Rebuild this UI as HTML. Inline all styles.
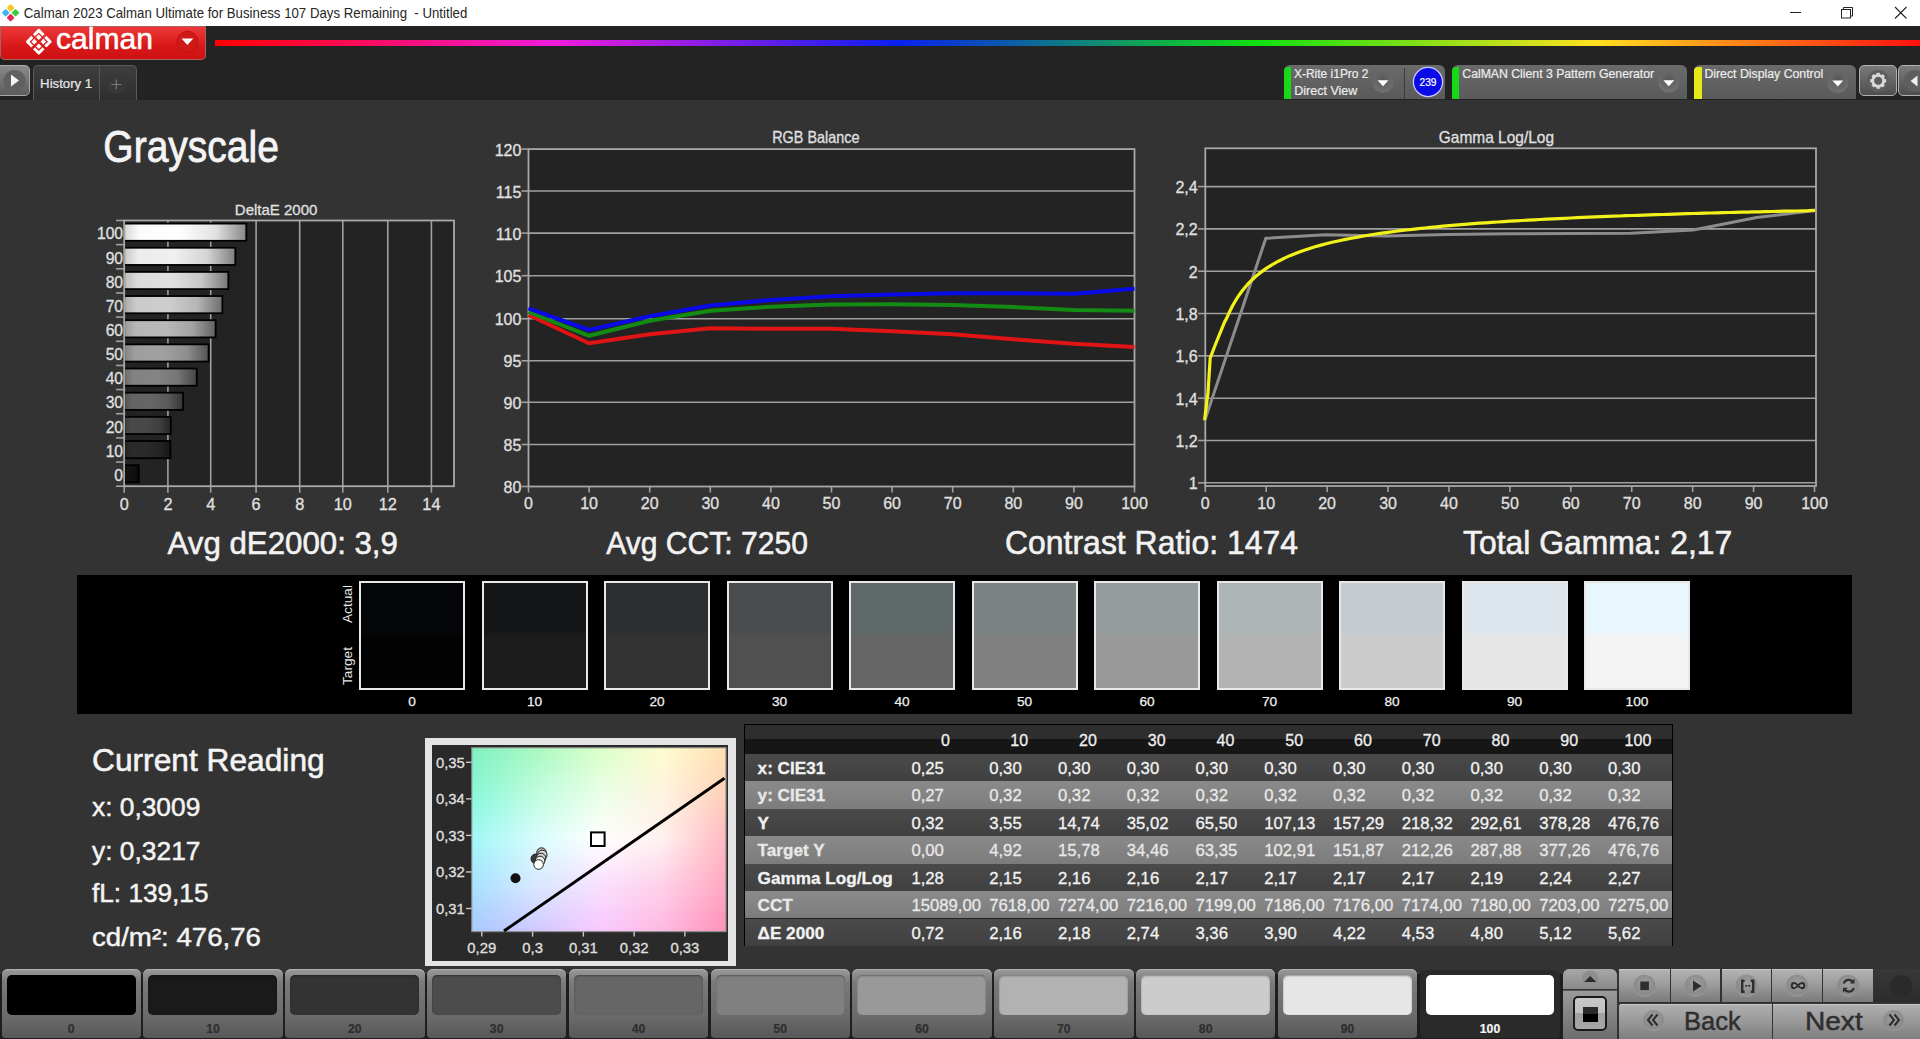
<!DOCTYPE html>
<html><head><meta charset="utf-8"><title>Calman</title>
<style>
html,body{margin:0;padding:0;width:1920px;height:1039px;overflow:hidden;background:#333;}
body{position:relative;font-family:"Liberation Sans", sans-serif;}
body>div{position:absolute;}
body>div>div{position:absolute;}
svg.ov{position:absolute;left:0;top:0;}
svg.ov text{font-family:"Liberation Sans", sans-serif;}
</style></head><body>
<div style="left:0px;top:0px;width:1920px;height:1039px;background:#333333"></div><div style="left:0px;top:0px;width:1920px;height:26px;background:#ffffff"></div><div style="left:0px;top:26px;width:1920px;height:74px;background:#232323"></div><div style="left:0px;top:26px;width:206px;height:33.5px;background:linear-gradient(#ee3a3a,#d81818 60%,#cc1010);border-radius:0 0 5px 5px;box-shadow:0 0 0 1px #a86060 inset"></div><div style="left:214.5px;top:39.5px;width:1705.5px;height:6px;background:linear-gradient(90deg,#ff0000 0%,#f01cdc 20%,#0a20f0 40%,#10e010 61%,#ffe020 81%,#ff1010 100%)"></div><div style="left:-4px;top:65.3px;width:34.4px;height:31px;background:linear-gradient(#8a8a8a,#5c5c5c);border:1px solid #a8a8a8;border-radius:5px;box-sizing:border-box"></div><div style="left:33.2px;top:65.3px;width:103.7px;height:34.7px;background:linear-gradient(#3e3e3e,#2e2e2e);border:1px solid #5a5a5a;border-bottom:none;border-radius:5px 5px 0 0;box-sizing:border-box"></div><div style="left:98.6px;top:66px;width:1.2px;height:34px;background:#555"></div><div style="left:1283.8px;top:65.3px;width:161.20000000000005px;height:33.3px;background:linear-gradient(#6a6a6a,#5a5a5a);border-radius:6px 6px 0 0"></div><div style="left:1283.8px;top:66.5px;width:7.5px;height:32.1px;background:#18d818;border-radius:4px 0 0 0"></div><div style="left:1404.2px;top:68px;width:1.3px;height:30.6px;background:#3a3a3a"></div><div style="left:1451.9px;top:65.3px;width:235.19999999999982px;height:33.3px;background:linear-gradient(#6a6a6a,#5a5a5a);border-radius:6px 6px 0 0"></div><div style="left:1451.9px;top:66.5px;width:7.5px;height:32.1px;background:#18d818;border-radius:4px 0 0 0"></div><div style="left:1694px;top:65.3px;width:162px;height:33.3px;background:linear-gradient(#6a6a6a,#5a5a5a);border-radius:6px 6px 0 0"></div><div style="left:1694px;top:66.5px;width:7.5px;height:32.1px;background:#e8e818;border-radius:4px 0 0 0"></div><div style="left:1859.4px;top:65.3px;width:37.5px;height:31.2px;background:linear-gradient(#7a7a7a,#4e4e4e);border:1px solid #b0b0b0;border-radius:5px;box-sizing:border-box"></div><div style="left:1898px;top:65.3px;width:30px;height:31.2px;background:linear-gradient(#7a7a7a,#4e4e4e);border:1px solid #b0b0b0;border-radius:5px;box-sizing:border-box"></div><div style="left:124.2px;top:220.5px;width:329.8px;height:265.7px;background:#232323"></div><div style="left:528.5px;top:148.5px;width:606.0px;height:338.5px;background:#232323"></div><div style="left:1205.3px;top:148.3px;width:610.7px;height:337.7px;background:#232323"></div><div style="left:77px;top:575.3px;width:1774.6px;height:138.5px;background:#000"></div><div style="left:359.0px;top:581px;width:106px;height:109px;background:linear-gradient(#050608 0%,#050608 45%,#020202 53%,#020202 100%);border:2px solid #e8e8e8;box-sizing:border-box"></div><div style="left:481.5px;top:581px;width:106px;height:109px;background:linear-gradient(#151618 0%,#151618 45%,#1c1c1c 53%,#1c1c1c 100%);border:2px solid #e8e8e8;box-sizing:border-box"></div><div style="left:604.0px;top:581px;width:106px;height:109px;background:linear-gradient(#2c2f30 0%,#2c2f30 45%,#333333 53%,#333333 100%);border:2px solid #e8e8e8;box-sizing:border-box"></div><div style="left:726.5px;top:581px;width:106px;height:109px;background:linear-gradient(#4a4d50 0%,#4a4d50 45%,#505050 53%,#505050 100%);border:2px solid #e8e8e8;box-sizing:border-box"></div><div style="left:849.0px;top:581px;width:106px;height:109px;background:linear-gradient(#5f6868 0%,#5f6868 45%,#666666 53%,#666666 100%);border:2px solid #e8e8e8;box-sizing:border-box"></div><div style="left:971.5px;top:581px;width:106px;height:109px;background:linear-gradient(#7a8283 0%,#7a8283 45%,#808080 53%,#808080 100%);border:2px solid #e8e8e8;box-sizing:border-box"></div><div style="left:1094.0px;top:581px;width:106px;height:109px;background:linear-gradient(#949c9e 0%,#949c9e 45%,#999999 53%,#999999 100%);border:2px solid #e8e8e8;box-sizing:border-box"></div><div style="left:1216.5px;top:581px;width:106px;height:109px;background:linear-gradient(#adb5b7 0%,#adb5b7 45%,#b3b3b3 53%,#b3b3b3 100%);border:2px solid #e8e8e8;box-sizing:border-box"></div><div style="left:1339.0px;top:581px;width:106px;height:109px;background:linear-gradient(#c4ccd1 0%,#c4ccd1 45%,#cccccc 53%,#cccccc 100%);border:2px solid #e8e8e8;box-sizing:border-box"></div><div style="left:1461.5px;top:581px;width:106px;height:109px;background:linear-gradient(#dce6ec 0%,#dce6ec 45%,#e6e6e6 53%,#e6e6e6 100%);border:2px solid #e8e8e8;box-sizing:border-box"></div><div style="left:1584.0px;top:581px;width:106px;height:109px;background:linear-gradient(#e8f6fd 0%,#e8f6fd 45%,#f4f4f4 53%,#f4f4f4 100%);border:2px solid #e8e8e8;box-sizing:border-box"></div><div style="left:424.7px;top:737.8px;width:311.3px;height:228px;background:#e4e4e4"></div><div style="left:431.8px;top:744.6px;width:296.7px;height:216.4px;background:#2a2a2a"></div><div style="left:471.7px;top:747.7px;width:254.3px;height:183.89999999999998px;overflow:hidden"><div style="left:0;top:0.00px;width:100%;height:4.60px;background:linear-gradient(90deg,#7ff0c1 0.0%,#94f4c1 12.5%,#a9f8c1 25.0%,#c1fcc5 37.5%,#d9ffc9 50.0%,#ecfdcd 62.5%,#fffcd1 75.0%,#ffedc1 87.5%,#ffdfb0 100.0%)"></div><div style="left:0;top:4.00px;width:100%;height:4.60px;background:linear-gradient(90deg,#80f1c3 0.0%,#96f5c4 12.5%,#abf9c4 25.0%,#c3fcc8 37.5%,#daffcc 50.0%,#edfdcf 62.5%,#fffbd2 75.0%,#ffecc2 87.5%,#ffdeb1 100.0%)"></div><div style="left:0;top:8.00px;width:100%;height:4.60px;background:linear-gradient(90deg,#81f2c5 0.0%,#97f5c6 12.5%,#adf9c7 25.0%,#c5fccb 37.5%,#dcffcf 50.0%,#edfdd1 62.5%,#fffad3 75.0%,#ffebc3 87.5%,#ffddb2 100.0%)"></div><div style="left:0;top:11.99px;width:100%;height:4.60px;background:linear-gradient(90deg,#82f2c7 0.0%,#99f6c9 12.5%,#aff9ca 25.0%,#c6fcce 37.5%,#ddffd2 50.0%,#eefcd3 62.5%,#fffad5 75.0%,#ffeac4 87.5%,#ffdbb2 100.0%)"></div><div style="left:0;top:15.99px;width:100%;height:4.60px;background:linear-gradient(90deg,#83f3c9 0.0%,#9af6cb 12.5%,#b1facd 25.0%,#c8fcd1 37.5%,#dfffd5 50.0%,#effcd5 62.5%,#fff9d6 75.0%,#ffe9c5 87.5%,#ffdab3 100.0%)"></div><div style="left:0;top:19.99px;width:100%;height:4.60px;background:linear-gradient(90deg,#83f4cb 0.0%,#9bf7cd 12.5%,#b3facf 25.0%,#cafcd3 37.5%,#e1ffd7 50.0%,#f0fcd7 62.5%,#fff8d8 75.0%,#ffe8c6 87.5%,#ffd8b4 100.0%)"></div><div style="left:0;top:23.99px;width:100%;height:4.60px;background:linear-gradient(90deg,#84f5ce 0.0%,#9df7d0 12.5%,#b6fad2 25.0%,#ccfdd6 37.5%,#e2ffda 50.0%,#f1fbda 62.5%,#fff7d9 75.0%,#ffe7c7 87.5%,#ffd7b5 100.0%)"></div><div style="left:0;top:27.98px;width:100%;height:4.60px;background:linear-gradient(90deg,#85f5d0 0.0%,#9ef8d2 12.5%,#b8fbd5 25.0%,#cefdd9 37.5%,#e4ffdd 50.0%,#f1fbdc 62.5%,#fff7da 75.0%,#ffe6c8 87.5%,#ffd6b5 100.0%)"></div><div style="left:0;top:31.98px;width:100%;height:4.60px;background:linear-gradient(90deg,#86f6d2 0.0%,#a0f8d5 12.5%,#bafbd8 25.0%,#d0fddc 37.5%,#e5ffe0 50.0%,#f2fbde 62.5%,#fff6dc 75.0%,#ffe5c9 87.5%,#ffd4b6 100.0%)"></div><div style="left:0;top:35.98px;width:100%;height:4.60px;background:linear-gradient(90deg,#86f7d4 0.0%,#a1f9d7 12.5%,#bcfbda 25.0%,#d1fdde 37.5%,#e7ffe2 50.0%,#f3fae0 62.5%,#fff5dd 75.0%,#ffe4ca 87.5%,#ffd3b7 100.0%)"></div><div style="left:0;top:39.98px;width:100%;height:4.60px;background:linear-gradient(90deg,#87f7d6 0.0%,#a3f9da 12.5%,#befcdd 25.0%,#d3fde1 37.5%,#e8ffe5 50.0%,#f4fae2 62.5%,#fff5df 75.0%,#ffe3cb 87.5%,#ffd1b7 100.0%)"></div><div style="left:0;top:43.98px;width:100%;height:4.60px;background:linear-gradient(90deg,#88f8d8 0.0%,#a4fadc 12.5%,#c0fce0 25.0%,#d5fee4 37.5%,#eaffe8 50.0%,#f4fae4 62.5%,#fff4e0 75.0%,#ffe2cc 87.5%,#ffd0b8 100.0%)"></div><div style="left:0;top:47.97px;width:100%;height:4.60px;background:linear-gradient(90deg,#8af8db 0.0%,#a6fadf 12.5%,#c2fce2 25.0%,#d7fee6 37.5%,#ecffea 50.0%,#f5f9e6 62.5%,#fff4e1 75.0%,#ffe1cd 87.5%,#ffceb9 100.0%)"></div><div style="left:0;top:51.97px;width:100%;height:4.60px;background:linear-gradient(90deg,#8cf8de 0.0%,#a8fae1 12.5%,#c4fce5 25.0%,#d9fee8 37.5%,#eeffec 50.0%,#f6f9e7 62.5%,#fff3e3 75.0%,#ffe0ce 87.5%,#ffccb9 100.0%)"></div><div style="left:0;top:55.97px;width:100%;height:4.60px;background:linear-gradient(90deg,#8ef8e0 0.0%,#aafae4 12.5%,#c6fce7 25.0%,#dbfeeb 37.5%,#efffee 50.0%,#f7f9e9 62.5%,#fff3e4 75.0%,#ffdecf 87.5%,#ffcaba 100.0%)"></div><div style="left:0;top:59.97px;width:100%;height:4.60px;background:linear-gradient(90deg,#90f8e3 0.0%,#acfae6 12.5%,#c8fcea 25.0%,#ddfeed 37.5%,#f1fff0 50.0%,#f8f9eb 62.5%,#fff3e6 75.0%,#ffddd0 87.5%,#ffc8bb 100.0%)"></div><div style="left:0;top:63.97px;width:100%;height:4.60px;background:linear-gradient(90deg,#92f8e6 0.0%,#aefae9 12.5%,#cafcec 25.0%,#dffeef 37.5%,#f3fff2 50.0%,#f9f9ec 62.5%,#fff2e7 75.0%,#ffdcd1 87.5%,#ffc6bb 100.0%)"></div><div style="left:0;top:67.96px;width:100%;height:4.60px;background:linear-gradient(90deg,#95f8e9 0.0%,#b1faec 12.5%,#cdfcef 25.0%,#e1fef1 37.5%,#f5fff4 50.0%,#faf8ee 62.5%,#fff2e8 75.0%,#ffdbd2 87.5%,#ffc3bc 100.0%)"></div><div style="left:0;top:71.96px;width:100%;height:4.60px;background:linear-gradient(90deg,#97f8eb 0.0%,#b3faee 12.5%,#cffcf1 25.0%,#e3fef4 37.5%,#f7fff6 50.0%,#fbf8f0 62.5%,#fff2ea 75.0%,#ffd9d3 87.5%,#ffc1bd 100.0%)"></div><div style="left:0;top:75.96px;width:100%;height:4.60px;background:linear-gradient(90deg,#99f8ee 0.0%,#b5faf1 12.5%,#d1fcf3 25.0%,#e5fef6 37.5%,#f9fff8 50.0%,#fcf8f2 62.5%,#fff1eb 75.0%,#ffd8d4 87.5%,#ffbfbe 100.0%)"></div><div style="left:0;top:79.96px;width:100%;height:4.60px;background:linear-gradient(90deg,#9bf8f1 0.0%,#b7faf3 12.5%,#d3fcf6 25.0%,#e7fef8 37.5%,#fafffa 50.0%,#fdf8f3 62.5%,#fff1ed 75.0%,#ffd7d5 87.5%,#ffbdbe 100.0%)"></div><div style="left:0;top:83.95px;width:100%;height:4.60px;background:linear-gradient(90deg,#9df8f4 0.0%,#b9faf6 12.5%,#d5fcf8 25.0%,#e9fefa 37.5%,#fcfffc 50.0%,#fef8f5 62.5%,#fff1ee 75.0%,#ffd6d6 87.5%,#ffbbbf 100.0%)"></div><div style="left:0;top:87.95px;width:100%;height:4.60px;background:linear-gradient(90deg,#9ff8f7 0.0%,#bbfaf9 12.5%,#d7fcfb 25.0%,#ebfefc 37.5%,#fefffe 50.0%,#fff8f7 62.5%,#fff0ef 75.0%,#ffd5d7 87.5%,#ffb9c0 100.0%)"></div><div style="left:0;top:91.95px;width:100%;height:4.60px;background:linear-gradient(90deg,#a0f7f8 0.0%,#bcf9fa 12.5%,#d8fbfc 25.0%,#ebfcfe 37.5%,#fffeff 50.0%,#fff6f7 62.5%,#ffeff0 75.0%,#ffd3d8 87.5%,#ffb7c0 100.0%)"></div><div style="left:0;top:95.95px;width:100%;height:4.60px;background:linear-gradient(90deg,#a1f5f9 0.0%,#bdf7fb 12.5%,#d8f9fc 25.0%,#ebfafe 37.5%,#fefbff 50.0%,#fff3f7 62.5%,#ffecef 75.0%,#ffd1d7 87.5%,#ffb6c0 100.0%)"></div><div style="left:0;top:99.95px;width:100%;height:4.60px;background:linear-gradient(90deg,#a2f3fa 0.0%,#bdf5fb 12.5%,#d8f8fd 25.0%,#ebf8fe 37.5%,#fdf8ff 50.0%,#fef1f7 62.5%,#ffe9ee 75.0%,#ffcfd7 87.5%,#ffb5c0 100.0%)"></div><div style="left:0;top:103.94px;width:100%;height:4.60px;background:linear-gradient(90deg,#a2f1fa 0.0%,#bdf3fc 12.5%,#d8f6fd 25.0%,#eaf6fe 37.5%,#fdf6ff 50.0%,#feeef6 62.5%,#ffe6ee 75.0%,#ffcdd7 87.5%,#ffb3c0 100.0%)"></div><div style="left:0;top:107.94px;width:100%;height:4.60px;background:linear-gradient(90deg,#a3effb 0.0%,#bef1fc 12.5%,#d8f4fd 25.0%,#eaf4fe 37.5%,#fcf3ff 50.0%,#feebf6 62.5%,#ffe3ed 75.0%,#ffcbd6 87.5%,#ffb2c0 100.0%)"></div><div style="left:0;top:111.94px;width:100%;height:4.60px;background:linear-gradient(90deg,#a4edfb 0.0%,#beeffc 12.5%,#d8f2fd 25.0%,#eaf1fe 37.5%,#fcf0ff 50.0%,#fde8f6 62.5%,#ffe1ec 75.0%,#ffc9d6 87.5%,#ffb0c0 100.0%)"></div><div style="left:0;top:115.94px;width:100%;height:4.60px;background:linear-gradient(90deg,#a5eafc 0.0%,#beeefd 12.5%,#d8f1fe 25.0%,#eaeffe 37.5%,#fbedff 50.0%,#fde6f5 62.5%,#ffdeeb 75.0%,#ffc6d6 87.5%,#ffafc0 100.0%)"></div><div style="left:0;top:119.93px;width:100%;height:4.60px;background:linear-gradient(90deg,#a5e8fd 0.0%,#bfecfd 12.5%,#d8effe 25.0%,#e9edfe 37.5%,#faebff 50.0%,#fde3f5 62.5%,#ffdbeb 75.0%,#ffc4d5 87.5%,#ffaec0 100.0%)"></div><div style="left:0;top:123.93px;width:100%;height:4.60px;background:linear-gradient(90deg,#a6e6fd 0.0%,#bfeafe 12.5%,#d8edfe 25.0%,#e9ebff 37.5%,#fae8ff 50.0%,#fce0f5 62.5%,#ffd8ea 75.0%,#ffc2d5 87.5%,#ffacc0 100.0%)"></div><div style="left:0;top:127.93px;width:100%;height:4.60px;background:linear-gradient(90deg,#a7e4fe 0.0%,#bfe8fe 12.5%,#d8ebfe 25.0%,#e9e8ff 37.5%,#f9e5ff 50.0%,#fcddf4 62.5%,#ffd6e9 75.0%,#ffc0d5 87.5%,#ffabc0 100.0%)"></div><div style="left:0;top:131.93px;width:100%;height:4.60px;background:linear-gradient(90deg,#a7e2fe 0.0%,#c0e6ff 12.5%,#d8eaff 25.0%,#e8e6ff 37.5%,#f9e3ff 50.0%,#fcdbf4 62.5%,#ffd3e9 75.0%,#ffbed4 87.5%,#ffa9c0 100.0%)"></div><div style="left:0;top:135.93px;width:100%;height:4.60px;background:linear-gradient(90deg,#a8e0ff 0.0%,#c0e4ff 12.5%,#d8e8ff 25.0%,#e8e4ff 37.5%,#f8e0ff 50.0%,#fcd8f4 62.5%,#ffd0e8 75.0%,#ffbcd4 87.5%,#ffa8c0 100.0%)"></div><div style="left:0;top:139.92px;width:100%;height:4.60px;background:linear-gradient(90deg,#a8deff 0.0%,#c0e2ff 12.5%,#d7e5ff 25.0%,#e8e2ff 37.5%,#f8deff 50.0%,#fcd6f3 62.5%,#ffcee7 75.0%,#ffbad3 87.5%,#ffa6bf 100.0%)"></div><div style="left:0;top:143.92px;width:100%;height:4.60px;background:linear-gradient(90deg,#a8dcff 0.0%,#bfdfff 12.5%,#d7e2ff 25.0%,#e7dfff 37.5%,#f8dcff 50.0%,#fcd4f3 62.5%,#ffcce7 75.0%,#ffb8d3 87.5%,#ffa4bf 100.0%)"></div><div style="left:0;top:147.92px;width:100%;height:4.60px;background:linear-gradient(90deg,#a8daff 0.0%,#bfddff 12.5%,#d6e0ff 25.0%,#e7ddff 37.5%,#f8daff 50.0%,#fcd2f2 62.5%,#ffcae6 75.0%,#ffb6d2 87.5%,#ffa2be 100.0%)"></div><div style="left:0;top:151.92px;width:100%;height:4.60px;background:linear-gradient(90deg,#a8d8ff 0.0%,#bfdaff 12.5%,#d5ddff 25.0%,#e7daff 37.5%,#f8d8ff 50.0%,#fcd0f2 62.5%,#ffc8e5 75.0%,#ffb4d1 87.5%,#ffa0bd 100.0%)"></div><div style="left:0;top:155.92px;width:100%;height:4.60px;background:linear-gradient(90deg,#a8d6ff 0.0%,#bed8ff 12.5%,#d5daff 25.0%,#e6d8ff 37.5%,#f8d6ff 50.0%,#fccef2 62.5%,#ffc6e5 75.0%,#ffb2d1 87.5%,#ff9ebd 100.0%)"></div><div style="left:0;top:159.91px;width:100%;height:4.60px;background:linear-gradient(90deg,#a8d3ff 0.0%,#bed5ff 12.5%,#d4d7ff 25.0%,#e6d5ff 37.5%,#f8d3ff 50.0%,#fccbf1 62.5%,#ffc3e4 75.0%,#ffafd0 87.5%,#ff9bbc 100.0%)"></div><div style="left:0;top:163.91px;width:100%;height:4.60px;background:linear-gradient(90deg,#a8d1ff 0.0%,#bed3ff 12.5%,#d3d5ff 25.0%,#e6d3ff 37.5%,#f8d1ff 50.0%,#fcc9f1 62.5%,#ffc1e3 75.0%,#ffadcf 87.5%,#ff99bb 100.0%)"></div><div style="left:0;top:167.91px;width:100%;height:4.60px;background:linear-gradient(90deg,#a8cfff 0.0%,#bdd1ff 12.5%,#d2d2ff 25.0%,#e5d1ff 37.5%,#f8cfff 50.0%,#fcc7f1 62.5%,#ffbfe2 75.0%,#ffabce 87.5%,#ff97ba 100.0%)"></div><div style="left:0;top:171.91px;width:100%;height:4.60px;background:linear-gradient(90deg,#a8cdff 0.0%,#bdceff 12.5%,#d2cfff 25.0%,#e5ceff 37.5%,#f8cdff 50.0%,#fcc5f0 62.5%,#ffbde2 75.0%,#ffa9ce 87.5%,#ff95ba 100.0%)"></div><div style="left:0;top:175.90px;width:100%;height:4.60px;background:linear-gradient(90deg,#a8cbff 0.0%,#bdccff 12.5%,#d1ccff 25.0%,#e5ccff 37.5%,#f8cbff 50.0%,#fcc3f0 62.5%,#ffbbe1 75.0%,#ffa7cd 87.5%,#ff93b9 100.0%)"></div><div style="left:0;top:179.90px;width:100%;height:4.60px;background:linear-gradient(90deg,#a8c9ff 0.0%,#bcc9ff 12.5%,#d0c9ff 25.0%,#e4c9ff 37.5%,#f8c9ff 50.0%,#fcc1f0 62.5%,#ffb9e0 75.0%,#ffa5cc 87.5%,#ff91b8 100.0%)"></div></div><div style="left:743.5px;top:723.5px;width:929.0px;height:222.1px;background:#202020;border:1px solid #000;border-bottom:none;box-sizing:border-box"></div><div style="left:744.5px;top:724.5px;width:927.0px;height:14.6px;background:#2e2e2e"></div><div style="left:744.5px;top:739.1px;width:927.0px;height:14.9px;background:#161616"></div><div style="left:744.5px;top:754.3px;width:927.0px;height:26.6px;background:linear-gradient(#4a4a4a,#404040)"></div><div style="left:744.5px;top:781.1999999999999px;width:927.0px;height:27.5px;background:linear-gradient(#8a8a8a,#7c7c7c)"></div><div style="left:744.5px;top:809.0px;width:927.0px;height:26.8px;background:linear-gradient(#4a4a4a,#404040)"></div><div style="left:744.5px;top:836.0999999999999px;width:927.0px;height:27.5px;background:linear-gradient(#8a8a8a,#7c7c7c)"></div><div style="left:744.5px;top:863.9px;width:927.0px;height:26.9px;background:linear-gradient(#4a4a4a,#404040)"></div><div style="left:744.5px;top:891.0999999999999px;width:927.0px;height:27.3px;background:linear-gradient(#8a8a8a,#7c7c7c)"></div><div style="left:744.5px;top:918.6999999999999px;width:927.0px;height:26.9px;background:linear-gradient(#4a4a4a,#404040)"></div><div style="left:0px;top:974px;width:1563px;height:65px;background:#1e1e1e"></div><div style="left:1.5px;top:968.8px;width:139.6px;height:68.8px;background:linear-gradient(#9a9a9a 0%,#7a7a7a 20%,#6a6a6a 70%,#585858 100%);border-radius:6px 6px 4px 4px;box-shadow:inset 0 1px 0 #b0b0b0"></div><div style="left:6.5px;top:974.6px;width:129px;height:40.8px;background:rgb(0,0,0);border-radius:5px;box-shadow:inset 0 1px 2px rgba(0,0,0,.35)"></div><div style="left:143.3px;top:968.8px;width:139.6px;height:68.8px;background:linear-gradient(#9a9a9a 0%,#7a7a7a 20%,#6a6a6a 70%,#585858 100%);border-radius:6px 6px 4px 4px;box-shadow:inset 0 1px 0 #b0b0b0"></div><div style="left:148.3px;top:974.6px;width:129px;height:40.8px;background:rgb(26,26,26);border-radius:5px;box-shadow:inset 0 1px 2px rgba(0,0,0,.35)"></div><div style="left:285.1px;top:968.8px;width:139.6px;height:68.8px;background:linear-gradient(#9a9a9a 0%,#7a7a7a 20%,#6a6a6a 70%,#585858 100%);border-radius:6px 6px 4px 4px;box-shadow:inset 0 1px 0 #b0b0b0"></div><div style="left:290.1px;top:974.6px;width:129px;height:40.8px;background:rgb(51,51,51);border-radius:5px;box-shadow:inset 0 1px 2px rgba(0,0,0,.35)"></div><div style="left:426.9px;top:968.8px;width:139.6px;height:68.8px;background:linear-gradient(#9a9a9a 0%,#7a7a7a 20%,#6a6a6a 70%,#585858 100%);border-radius:6px 6px 4px 4px;box-shadow:inset 0 1px 0 #b0b0b0"></div><div style="left:431.9px;top:974.6px;width:129px;height:40.8px;background:rgb(76,76,76);border-radius:5px;box-shadow:inset 0 1px 2px rgba(0,0,0,.35)"></div><div style="left:568.7px;top:968.8px;width:139.6px;height:68.8px;background:linear-gradient(#9a9a9a 0%,#7a7a7a 20%,#6a6a6a 70%,#585858 100%);border-radius:6px 6px 4px 4px;box-shadow:inset 0 1px 0 #b0b0b0"></div><div style="left:573.7px;top:974.6px;width:129px;height:40.8px;background:rgb(102,102,102);border-radius:5px;box-shadow:inset 0 1px 2px rgba(0,0,0,.35)"></div><div style="left:710.5px;top:968.8px;width:139.6px;height:68.8px;background:linear-gradient(#9a9a9a 0%,#7a7a7a 20%,#6a6a6a 70%,#585858 100%);border-radius:6px 6px 4px 4px;box-shadow:inset 0 1px 0 #b0b0b0"></div><div style="left:715.5px;top:974.6px;width:129px;height:40.8px;background:rgb(128,128,128);border-radius:5px;box-shadow:inset 0 1px 2px rgba(0,0,0,.35)"></div><div style="left:852.3px;top:968.8px;width:139.6px;height:68.8px;background:linear-gradient(#9a9a9a 0%,#7a7a7a 20%,#6a6a6a 70%,#585858 100%);border-radius:6px 6px 4px 4px;box-shadow:inset 0 1px 0 #b0b0b0"></div><div style="left:857.3px;top:974.6px;width:129px;height:40.8px;background:rgb(153,153,153);border-radius:5px;box-shadow:inset 0 1px 2px rgba(0,0,0,.35)"></div><div style="left:994.1px;top:968.8px;width:139.6px;height:68.8px;background:linear-gradient(#9a9a9a 0%,#7a7a7a 20%,#6a6a6a 70%,#585858 100%);border-radius:6px 6px 4px 4px;box-shadow:inset 0 1px 0 #b0b0b0"></div><div style="left:999.1px;top:974.6px;width:129px;height:40.8px;background:rgb(178,178,178);border-radius:5px;box-shadow:inset 0 1px 2px rgba(0,0,0,.35)"></div><div style="left:1135.9px;top:968.8px;width:139.6px;height:68.8px;background:linear-gradient(#9a9a9a 0%,#7a7a7a 20%,#6a6a6a 70%,#585858 100%);border-radius:6px 6px 4px 4px;box-shadow:inset 0 1px 0 #b0b0b0"></div><div style="left:1140.9px;top:974.6px;width:129px;height:40.8px;background:rgb(204,204,204);border-radius:5px;box-shadow:inset 0 1px 2px rgba(0,0,0,.35)"></div><div style="left:1277.7px;top:968.8px;width:139.6px;height:68.8px;background:linear-gradient(#9a9a9a 0%,#7a7a7a 20%,#6a6a6a 70%,#585858 100%);border-radius:6px 6px 4px 4px;box-shadow:inset 0 1px 0 #b0b0b0"></div><div style="left:1282.7px;top:974.6px;width:129px;height:40.8px;background:rgb(230,230,230);border-radius:5px;box-shadow:inset 0 1px 2px rgba(0,0,0,.35)"></div><div style="left:1420.3px;top:969.5px;width:139.5px;height:68.1px;background:#2a2a2a;border-radius:6px 6px 4px 4px"></div><div style="left:1426.3px;top:974.9px;width:128.1px;height:40.6px;background:#ffffff;border-radius:5px"></div><div style="left:1563.1px;top:969.2px;width:54.2px;height:20px;background:linear-gradient(#a8a8a8,#8a8a8a);border-radius:6px 6px 0 0"></div><div style="left:1563.1px;top:989.6px;width:54.2px;height:50px;background:linear-gradient(#9a9a9a,#6c6c6c);border-top:1px solid #5a5a5a;box-sizing:border-box"></div><div style="left:1573px;top:996.3px;width:34.4px;height:34.8px;background:linear-gradient(#c8c8c8 0%,#c0c0c0 50%,#a0a0a0 50%,#a8a8a8 100%);border:2.6px solid #1a1a1a;border-radius:5px;box-sizing:border-box"></div><div style="left:1583px;top:1007px;width:15px;height:14.8px;background:linear-gradient(#2a2a2a 0%,#2a2a2a 45%,#000 45%)"></div><div style="left:1618.9px;top:969px;width:50.9px;height:33.2px;background:linear-gradient(#b4b4b4,#a0a0a0 40%,#7a7a7a);box-shadow:inset 0 1px 0 #c8c8c8"></div><div style="left:1671px;top:969px;width:49.3px;height:33.2px;background:linear-gradient(#b4b4b4,#a0a0a0 40%,#7a7a7a);box-shadow:inset 0 1px 0 #c8c8c8"></div><div style="left:1721.5px;top:969px;width:49.6px;height:33.2px;background:linear-gradient(#b4b4b4,#a0a0a0 40%,#7a7a7a);box-shadow:inset 0 1px 0 #c8c8c8"></div><div style="left:1772.3px;top:969px;width:49.5px;height:33.2px;background:linear-gradient(#b4b4b4,#a0a0a0 40%,#7a7a7a);box-shadow:inset 0 1px 0 #c8c8c8"></div><div style="left:1823px;top:969px;width:50.0px;height:33.2px;background:linear-gradient(#b4b4b4,#a0a0a0 40%,#7a7a7a);box-shadow:inset 0 1px 0 #c8c8c8"></div><div style="left:1874.2px;top:969px;width:45.8px;height:33.2px;background:linear-gradient(#383838,#2c2c2c)"></div><div style="left:1618.9px;top:1003.8px;width:153px;height:36px;background:linear-gradient(#b0b0b0,#989898 50%,#7c7c7c);border-radius:3px 0 0 0;box-shadow:inset 0 1px 0 #c8c8c8"></div><div style="left:1773.0px;top:1003.8px;width:147px;height:36px;background:linear-gradient(#b0b0b0,#989898 50%,#7c7c7c);box-shadow:inset 0 1px 0 #c8c8c8"></div>
<svg class="ov" width="1920" height="1039" viewBox="0 0 1920 1039">
<defs><linearGradient id="bar0" x1="0" y1="0" x2="1" y2="0"><stop offset="0" stop-color="rgb(216,216,216)"/><stop offset="0.12" stop-color="rgb(252,252,252)"/><stop offset="0.45" stop-color="rgb(255,255,255)"/><stop offset="0.75" stop-color="rgb(226,226,226)"/><stop offset="1" stop-color="rgb(138,138,138)"/></linearGradient><linearGradient id="bar1" x1="0" y1="0" x2="1" y2="0"><stop offset="0" stop-color="rgb(202,202,202)"/><stop offset="0.12" stop-color="rgb(236,236,236)"/><stop offset="0.45" stop-color="rgb(240,240,240)"/><stop offset="0.75" stop-color="rgb(212,212,212)"/><stop offset="1" stop-color="rgb(129,129,129)"/></linearGradient><linearGradient id="bar2" x1="0" y1="0" x2="1" y2="0"><stop offset="0" stop-color="rgb(189,189,189)"/><stop offset="0.12" stop-color="rgb(220,220,220)"/><stop offset="0.45" stop-color="rgb(224,224,224)"/><stop offset="0.75" stop-color="rgb(198,198,198)"/><stop offset="1" stop-color="rgb(121,121,121)"/></linearGradient><linearGradient id="bar3" x1="0" y1="0" x2="1" y2="0"><stop offset="0" stop-color="rgb(173,173,173)"/><stop offset="0.12" stop-color="rgb(202,202,202)"/><stop offset="0.45" stop-color="rgb(206,206,206)"/><stop offset="0.75" stop-color="rgb(181,181,181)"/><stop offset="1" stop-color="rgb(111,111,111)"/></linearGradient><linearGradient id="bar4" x1="0" y1="0" x2="1" y2="0"><stop offset="0" stop-color="rgb(156,156,156)"/><stop offset="0.12" stop-color="rgb(182,182,182)"/><stop offset="0.45" stop-color="rgb(185,185,185)"/><stop offset="0.75" stop-color="rgb(163,163,163)"/><stop offset="1" stop-color="rgb(100,100,100)"/></linearGradient><linearGradient id="bar5" x1="0" y1="0" x2="1" y2="0"><stop offset="0" stop-color="rgb(135,135,135)"/><stop offset="0.12" stop-color="rgb(158,158,158)"/><stop offset="0.45" stop-color="rgb(161,161,161)"/><stop offset="0.75" stop-color="rgb(142,142,142)"/><stop offset="1" stop-color="rgb(86,86,86)"/></linearGradient><linearGradient id="bar6" x1="0" y1="0" x2="1" y2="0"><stop offset="0" stop-color="rgb(111,111,111)"/><stop offset="0.12" stop-color="rgb(130,130,130)"/><stop offset="0.45" stop-color="rgb(132,132,132)"/><stop offset="0.75" stop-color="rgb(117,117,117)"/><stop offset="1" stop-color="rgb(71,71,71)"/></linearGradient><linearGradient id="bar7" x1="0" y1="0" x2="1" y2="0"><stop offset="0" stop-color="rgb(86,86,86)"/><stop offset="0.12" stop-color="rgb(100,100,100)"/><stop offset="0.45" stop-color="rgb(102,102,102)"/><stop offset="0.75" stop-color="rgb(90,90,90)"/><stop offset="1" stop-color="rgb(55,55,55)"/></linearGradient><linearGradient id="bar8" x1="0" y1="0" x2="1" y2="0"><stop offset="0" stop-color="rgb(61,61,61)"/><stop offset="0.12" stop-color="rgb(72,72,72)"/><stop offset="0.45" stop-color="rgb(73,73,73)"/><stop offset="0.75" stop-color="rgb(64,64,64)"/><stop offset="1" stop-color="rgb(39,39,39)"/></linearGradient><linearGradient id="bar9" x1="0" y1="0" x2="1" y2="0"><stop offset="0" stop-color="rgb(36,36,36)"/><stop offset="0.12" stop-color="rgb(42,42,42)"/><stop offset="0.45" stop-color="rgb(42,42,42)"/><stop offset="0.75" stop-color="rgb(37,37,37)"/><stop offset="1" stop-color="rgb(23,23,23)"/></linearGradient><linearGradient id="bar10" x1="0" y1="0" x2="1" y2="0"><stop offset="0" stop-color="rgb(15,15,15)"/><stop offset="0.12" stop-color="rgb(18,18,18)"/><stop offset="0.45" stop-color="rgb(18,18,18)"/><stop offset="0.75" stop-color="rgb(16,16,16)"/><stop offset="1" stop-color="rgb(9,9,9)"/></linearGradient><radialGradient id="ddg" cx="0.5" cy="0.35" r="0.6"><stop offset="0" stop-color="#585858"/><stop offset="1" stop-color="#707070"/></radialGradient><radialGradient id="tbg" cx="0.5" cy="0.4" r="0.6"><stop offset="0" stop-color="#a0a0a0"/><stop offset="0.8" stop-color="#8a8a8a"/><stop offset="1" stop-color="#9a9a9a"/></radialGradient></defs>
<g transform="translate(10.6,12.8) rotate(45)"><rect x="-6.3" y="-6.3" width="5.7" height="5.7" rx="1" fill="#f6c72a"/><rect x="0.6" y="-6.3" width="5.7" height="5.7" rx="1" fill="#34cf3c"/><rect x="0.6" y="0.6" width="5.7" height="5.7" rx="1" fill="#e62a58"/><rect x="-6.3" y="0.6" width="5.7" height="5.7" rx="1" fill="#3cb6ec"/></g><text x="23.80" y="17.80" font-size="14.10" fill="#262626" textLength="443.50" lengthAdjust="spacingAndGlyphs" >Calman 2023 Calman Ultimate for Business 107 Days Remaining  - Untitled</text><line x1="1790" y1="12.5" x2="1801" y2="12.5" stroke="#222" stroke-width="1"/><rect x="1841.5" y="9.5" width="9" height="8.5" fill="none" stroke="#222" stroke-width="1"/><path d="M1843.5 9.5 V7.5 H1852.5 V16 H1850.5" fill="none" stroke="#222" stroke-width="1"/><path d="M1895 7 L1906.5 18.5 M1906.5 7 L1895 18.5" stroke="#222" stroke-width="1.1"/><g transform="translate(38.8,41.7) rotate(45)" fill="none" stroke="#fff" stroke-width="3" stroke-linejoin="round"><path d="M-8 -1.2 V-8 H-1.2 M1.2 -8 H8 V-1.2 M8 1.2 V8 H1.2 M-1.2 8 H-8 V1.2"/><g fill="#fff" stroke="none"><rect x="-5.2" y="-5.2" width="4" height="4"/><rect x="1.2" y="-5.2" width="4" height="4"/><rect x="-5.2" y="1.2" width="4" height="4"/><rect x="1.2" y="1.2" width="4" height="4"/></g></g><text x="56.00" y="49.20" font-size="29.50" fill="#ffffff" textLength="97.00" lengthAdjust="spacingAndGlyphs" stroke="#ffffff" stroke-width="0.53" >calman</text><circle cx="187.4" cy="41.8" r="10.5" fill="#d01a1a" stroke="#c01010" stroke-width="1"/><path d="M181.5 38.5 L193.3 38.5 L187.4 45 Z" fill="#fff"/><circle cx="14.5" cy="81" r="11" fill="#606060"/><path d="M11 74.5 L19 80.5 L11 86.5 Z" fill="#f5f5f5"/><text x="40.10" y="87.60" font-size="13.52" fill="#e6e6e6" textLength="52.10" lengthAdjust="spacingAndGlyphs" stroke="#e6e6e6" stroke-width="0.24" >History 1</text><circle cx="116.3" cy="84.5" r="9.5" fill="#383838"/><path d="M116.3 79.5 V89.5 M111.3 84.5 H121.3" stroke="#777" stroke-width="1.2"/><text x="1294.00" y="78.30" font-size="12.50" fill="#ececec" textLength="74.50" lengthAdjust="spacingAndGlyphs" stroke="#ececec" stroke-width="0.22" >X-Rite i1Pro 2</text><text x="1294.30" y="94.70" font-size="12.50" fill="#ececec" textLength="63.00" lengthAdjust="spacingAndGlyphs" stroke="#ececec" stroke-width="0.22" >Direct View</text><circle cx="1383" cy="82.3" r="10.5" fill="url(#ddg)"/><path d="M1377.5 80.3 L1388.5 80.3 L1383 86.3 Z" fill="#fff"/><circle cx="1428" cy="82" r="14.6" fill="#0a0ae8" stroke="#c8c8ff" stroke-width="1.3"/><text x="1428.00" y="86.20" font-size="11.63" fill="#ffffff" text-anchor="middle" textLength="17.00" lengthAdjust="spacingAndGlyphs" stroke="#ffffff" stroke-width="0.21" >239</text><text x="1462.30" y="78.30" font-size="12.50" fill="#ececec" textLength="191.80" lengthAdjust="spacingAndGlyphs" stroke="#ececec" stroke-width="0.22" >CalMAN Client 3 Pattern Generator</text><circle cx="1668.8" cy="82.3" r="10.5" fill="url(#ddg)"/><path d="M1663.3 80.3 L1674.3 80.3 L1668.8 86.3 Z" fill="#fff"/><text x="1704.40" y="78.30" font-size="12.50" fill="#ececec" textLength="118.90" lengthAdjust="spacingAndGlyphs" stroke="#ececec" stroke-width="0.22" >Direct Display Control</text><circle cx="1837.8" cy="82.5" r="10.5" fill="url(#ddg)"/><path d="M1832.3 80.5 L1843.3 80.5 L1837.8 86.5 Z" fill="#fff"/><circle cx="1878.2" cy="81" r="11" fill="#5e5e5e"/><g transform="translate(1878.2,80.8)" fill="#d8d8d8"><rect x="-1.6" y="-8" width="3.2" height="4" transform="rotate(0)"/><rect x="-1.6" y="-8" width="3.2" height="4" transform="rotate(45)"/><rect x="-1.6" y="-8" width="3.2" height="4" transform="rotate(90)"/><rect x="-1.6" y="-8" width="3.2" height="4" transform="rotate(135)"/><rect x="-1.6" y="-8" width="3.2" height="4" transform="rotate(180)"/><rect x="-1.6" y="-8" width="3.2" height="4" transform="rotate(225)"/><rect x="-1.6" y="-8" width="3.2" height="4" transform="rotate(270)"/><rect x="-1.6" y="-8" width="3.2" height="4" transform="rotate(315)"/><circle r="5.6" fill="none" stroke="#d8d8d8" stroke-width="2.6"/></g><circle cx="1915" cy="81" r="11" fill="#5e5e5e"/><path d="M1917.5 75.5 L1910.5 81 L1917.5 86.5 Z" fill="#f0f0f0"/><text x="103.30" y="162.20" font-size="43.46" fill="#f4f4f4" textLength="175.60" lengthAdjust="spacingAndGlyphs" stroke="#f4f4f4" stroke-width="0.78" >Grayscale</text><text x="234.80" y="215.40" font-size="15.55" fill="#e0e0e0" textLength="82.60" lengthAdjust="spacingAndGlyphs" stroke="#e0e0e0" stroke-width="0.28" >DeltaE 2000</text><text x="124.20" y="509.50" font-size="16.28" fill="#e0e0e0" text-anchor="middle" stroke="#e0e0e0" stroke-width="0.29" >0</text><text x="167.90" y="509.50" font-size="16.28" fill="#e0e0e0" text-anchor="middle" stroke="#e0e0e0" stroke-width="0.29" >2</text><text x="210.70" y="509.50" font-size="16.28" fill="#e0e0e0" text-anchor="middle" stroke="#e0e0e0" stroke-width="0.29" >4</text><text x="256.10" y="509.50" font-size="16.28" fill="#e0e0e0" text-anchor="middle" stroke="#e0e0e0" stroke-width="0.29" >6</text><text x="299.70" y="509.50" font-size="16.28" fill="#e0e0e0" text-anchor="middle" stroke="#e0e0e0" stroke-width="0.29" >8</text><text x="342.80" y="509.50" font-size="16.28" fill="#e0e0e0" text-anchor="middle" stroke="#e0e0e0" stroke-width="0.29" >10</text><text x="387.80" y="509.50" font-size="16.28" fill="#e0e0e0" text-anchor="middle" stroke="#e0e0e0" stroke-width="0.29" >12</text><text x="431.40" y="509.50" font-size="16.28" fill="#e0e0e0" text-anchor="middle" stroke="#e0e0e0" stroke-width="0.29" >14</text><line x1="124.2" y1="486.2" x2="124.2" y2="492.7" stroke="#a0a0a0" stroke-width="1.6"/><line x1="167.9" y1="220.5" x2="167.9" y2="486.2" stroke="#a0a0a0" stroke-width="1.6"/><line x1="167.9" y1="486.2" x2="167.9" y2="492.7" stroke="#a0a0a0" stroke-width="1.6"/><line x1="210.7" y1="220.5" x2="210.7" y2="486.2" stroke="#a0a0a0" stroke-width="1.6"/><line x1="210.7" y1="486.2" x2="210.7" y2="492.7" stroke="#a0a0a0" stroke-width="1.6"/><line x1="256.1" y1="220.5" x2="256.1" y2="486.2" stroke="#a0a0a0" stroke-width="1.6"/><line x1="256.1" y1="486.2" x2="256.1" y2="492.7" stroke="#a0a0a0" stroke-width="1.6"/><line x1="299.7" y1="220.5" x2="299.7" y2="486.2" stroke="#a0a0a0" stroke-width="1.6"/><line x1="299.7" y1="486.2" x2="299.7" y2="492.7" stroke="#a0a0a0" stroke-width="1.6"/><line x1="342.8" y1="220.5" x2="342.8" y2="486.2" stroke="#a0a0a0" stroke-width="1.6"/><line x1="342.8" y1="486.2" x2="342.8" y2="492.7" stroke="#a0a0a0" stroke-width="1.6"/><line x1="387.8" y1="220.5" x2="387.8" y2="486.2" stroke="#a0a0a0" stroke-width="1.6"/><line x1="387.8" y1="486.2" x2="387.8" y2="492.7" stroke="#a0a0a0" stroke-width="1.6"/><line x1="431.4" y1="220.5" x2="431.4" y2="486.2" stroke="#a0a0a0" stroke-width="1.6"/><line x1="431.4" y1="486.2" x2="431.4" y2="492.7" stroke="#a0a0a0" stroke-width="1.6"/><line x1="116" y1="220.50" x2="124.2" y2="220.50" stroke="#a0a0a0" stroke-width="1.6"/><line x1="116" y1="244.65" x2="124.2" y2="244.65" stroke="#a0a0a0" stroke-width="1.6"/><line x1="116" y1="268.81" x2="124.2" y2="268.81" stroke="#a0a0a0" stroke-width="1.6"/><line x1="116" y1="292.96" x2="124.2" y2="292.96" stroke="#a0a0a0" stroke-width="1.6"/><line x1="116" y1="317.12" x2="124.2" y2="317.12" stroke="#a0a0a0" stroke-width="1.6"/><line x1="116" y1="341.27" x2="124.2" y2="341.27" stroke="#a0a0a0" stroke-width="1.6"/><line x1="116" y1="365.43" x2="124.2" y2="365.43" stroke="#a0a0a0" stroke-width="1.6"/><line x1="116" y1="389.58" x2="124.2" y2="389.58" stroke="#a0a0a0" stroke-width="1.6"/><line x1="116" y1="413.74" x2="124.2" y2="413.74" stroke="#a0a0a0" stroke-width="1.6"/><line x1="116" y1="437.89" x2="124.2" y2="437.89" stroke="#a0a0a0" stroke-width="1.6"/><line x1="116" y1="462.05" x2="124.2" y2="462.05" stroke="#a0a0a0" stroke-width="1.6"/><line x1="116" y1="486.20" x2="124.2" y2="486.20" stroke="#a0a0a0" stroke-width="1.6"/><rect x="124.2" y="220.5" width="329.8" height="265.7" fill="none" stroke="#a8a8a8" stroke-width="1.8"/><text x="123.10" y="239.40" font-size="15.70" fill="#e0e0e0" text-anchor="end" stroke="#e0e0e0" stroke-width="0.28" >100</text><rect x="125.10000000000001" y="222.70" width="122.10" height="19" fill="#000"/><rect x="125.10000000000001" y="224.50" width="120.30" height="15.4" fill="url(#bar0)"/><text x="123.10" y="263.55" font-size="15.70" fill="#e0e0e0" text-anchor="end" stroke="#e0e0e0" stroke-width="0.28" >90</text><rect x="125.10000000000001" y="246.85" width="111.13" height="19" fill="#000"/><rect x="125.10000000000001" y="248.65" width="109.33" height="15.4" fill="url(#bar1)"/><text x="123.10" y="287.71" font-size="15.70" fill="#e0e0e0" text-anchor="end" stroke="#e0e0e0" stroke-width="0.28" >80</text><rect x="125.10000000000001" y="271.01" width="104.11" height="19" fill="#000"/><rect x="125.10000000000001" y="272.81" width="102.31" height="15.4" fill="url(#bar2)"/><text x="123.10" y="311.86" font-size="15.70" fill="#e0e0e0" text-anchor="end" stroke="#e0e0e0" stroke-width="0.28" >70</text><rect x="125.10000000000001" y="295.16" width="98.19" height="19" fill="#000"/><rect x="125.10000000000001" y="296.96" width="96.39" height="15.4" fill="url(#bar3)"/><text x="123.10" y="336.02" font-size="15.70" fill="#e0e0e0" text-anchor="end" stroke="#e0e0e0" stroke-width="0.28" >60</text><rect x="125.10000000000001" y="319.32" width="91.39" height="19" fill="#000"/><rect x="125.10000000000001" y="321.12" width="89.59" height="15.4" fill="url(#bar4)"/><text x="123.10" y="360.17" font-size="15.70" fill="#e0e0e0" text-anchor="end" stroke="#e0e0e0" stroke-width="0.28" >50</text><rect x="125.10000000000001" y="343.47" width="84.37" height="19" fill="#000"/><rect x="125.10000000000001" y="345.27" width="82.57" height="15.4" fill="url(#bar5)"/><text x="123.10" y="384.33" font-size="15.70" fill="#e0e0e0" text-anchor="end" stroke="#e0e0e0" stroke-width="0.28" >40</text><rect x="125.10000000000001" y="367.63" width="72.52" height="19" fill="#000"/><rect x="125.10000000000001" y="369.43" width="70.72" height="15.4" fill="url(#bar6)"/><text x="123.10" y="408.48" font-size="15.70" fill="#e0e0e0" text-anchor="end" stroke="#e0e0e0" stroke-width="0.28" >30</text><rect x="125.10000000000001" y="391.78" width="58.92" height="19" fill="#000"/><rect x="125.10000000000001" y="393.58" width="57.12" height="15.4" fill="url(#bar7)"/><text x="123.10" y="432.64" font-size="15.70" fill="#e0e0e0" text-anchor="end" stroke="#e0e0e0" stroke-width="0.28" >20</text><rect x="125.10000000000001" y="415.94" width="46.63" height="19" fill="#000"/><rect x="125.10000000000001" y="417.74" width="44.83" height="15.4" fill="url(#bar8)"/><text x="123.10" y="456.79" font-size="15.70" fill="#e0e0e0" text-anchor="end" stroke="#e0e0e0" stroke-width="0.28" >10</text><rect x="125.10000000000001" y="440.09" width="46.19" height="19" fill="#000"/><rect x="125.10000000000001" y="441.89" width="44.39" height="15.4" fill="url(#bar9)"/><text x="123.10" y="480.95" font-size="15.70" fill="#e0e0e0" text-anchor="end" stroke="#e0e0e0" stroke-width="0.28" >0</text><rect x="125.10000000000001" y="464.25" width="14.60" height="19" fill="#000"/><rect x="125.10000000000001" y="466.05" width="12.80" height="15.4" fill="url(#bar10)"/><text x="772.20" y="142.80" font-size="16.28" fill="#e0e0e0" textLength="87.20" lengthAdjust="spacingAndGlyphs" stroke="#e0e0e0" stroke-width="0.29" >RGB Balance</text><line x1="521.5" y1="149.10" x2="528.5" y2="149.10" stroke="#a0a0a0" stroke-width="1.6"/><text x="521.30" y="155.60" font-size="15.99" fill="#e0e0e0" text-anchor="end" stroke="#e0e0e0" stroke-width="0.29" >120</text><line x1="528.5" y1="191.00" x2="1134.5" y2="191.00" stroke="#a0a0a0" stroke-width="1.6"/><line x1="521.5" y1="191.00" x2="528.5" y2="191.00" stroke="#a0a0a0" stroke-width="1.6"/><text x="521.30" y="197.50" font-size="15.99" fill="#e0e0e0" text-anchor="end" stroke="#e0e0e0" stroke-width="0.29" >115</text><line x1="528.5" y1="233.10" x2="1134.5" y2="233.10" stroke="#a0a0a0" stroke-width="1.6"/><line x1="521.5" y1="233.10" x2="528.5" y2="233.10" stroke="#a0a0a0" stroke-width="1.6"/><text x="521.30" y="239.60" font-size="15.99" fill="#e0e0e0" text-anchor="end" stroke="#e0e0e0" stroke-width="0.29" >110</text><line x1="528.5" y1="275.70" x2="1134.5" y2="275.70" stroke="#a0a0a0" stroke-width="1.6"/><line x1="521.5" y1="275.70" x2="528.5" y2="275.70" stroke="#a0a0a0" stroke-width="1.6"/><text x="521.30" y="282.20" font-size="15.99" fill="#e0e0e0" text-anchor="end" stroke="#e0e0e0" stroke-width="0.29" >105</text><line x1="528.5" y1="318.80" x2="1134.5" y2="318.80" stroke="#a0a0a0" stroke-width="1.6"/><line x1="521.5" y1="318.80" x2="528.5" y2="318.80" stroke="#a0a0a0" stroke-width="1.6"/><text x="521.30" y="325.30" font-size="15.99" fill="#e0e0e0" text-anchor="end" stroke="#e0e0e0" stroke-width="0.29" >100</text><line x1="528.5" y1="360.80" x2="1134.5" y2="360.80" stroke="#a0a0a0" stroke-width="1.6"/><line x1="521.5" y1="360.80" x2="528.5" y2="360.80" stroke="#a0a0a0" stroke-width="1.6"/><text x="521.30" y="367.30" font-size="15.99" fill="#e0e0e0" text-anchor="end" stroke="#e0e0e0" stroke-width="0.29" >95</text><line x1="528.5" y1="402.30" x2="1134.5" y2="402.30" stroke="#a0a0a0" stroke-width="1.6"/><line x1="521.5" y1="402.30" x2="528.5" y2="402.30" stroke="#a0a0a0" stroke-width="1.6"/><text x="521.30" y="408.80" font-size="15.99" fill="#e0e0e0" text-anchor="end" stroke="#e0e0e0" stroke-width="0.29" >90</text><line x1="528.5" y1="444.50" x2="1134.5" y2="444.50" stroke="#a0a0a0" stroke-width="1.6"/><line x1="521.5" y1="444.50" x2="528.5" y2="444.50" stroke="#a0a0a0" stroke-width="1.6"/><text x="521.30" y="451.00" font-size="15.99" fill="#e0e0e0" text-anchor="end" stroke="#e0e0e0" stroke-width="0.29" >85</text><line x1="521.5" y1="486.50" x2="528.5" y2="486.50" stroke="#a0a0a0" stroke-width="1.6"/><text x="521.30" y="493.00" font-size="15.99" fill="#e0e0e0" text-anchor="end" stroke="#e0e0e0" stroke-width="0.29" >80</text><line x1="528.50" y1="486.5" x2="528.50" y2="492.5" stroke="#a0a0a0" stroke-width="1.6"/><text x="528.50" y="509.40" font-size="15.99" fill="#e0e0e0" text-anchor="middle" stroke="#e0e0e0" stroke-width="0.29" >0</text><line x1="589.10" y1="486.5" x2="589.10" y2="492.5" stroke="#a0a0a0" stroke-width="1.6"/><text x="589.10" y="509.40" font-size="15.99" fill="#e0e0e0" text-anchor="middle" stroke="#e0e0e0" stroke-width="0.29" >10</text><line x1="649.70" y1="486.5" x2="649.70" y2="492.5" stroke="#a0a0a0" stroke-width="1.6"/><text x="649.70" y="509.40" font-size="15.99" fill="#e0e0e0" text-anchor="middle" stroke="#e0e0e0" stroke-width="0.29" >20</text><line x1="710.30" y1="486.5" x2="710.30" y2="492.5" stroke="#a0a0a0" stroke-width="1.6"/><text x="710.30" y="509.40" font-size="15.99" fill="#e0e0e0" text-anchor="middle" stroke="#e0e0e0" stroke-width="0.29" >30</text><line x1="770.90" y1="486.5" x2="770.90" y2="492.5" stroke="#a0a0a0" stroke-width="1.6"/><text x="770.90" y="509.40" font-size="15.99" fill="#e0e0e0" text-anchor="middle" stroke="#e0e0e0" stroke-width="0.29" >40</text><line x1="831.50" y1="486.5" x2="831.50" y2="492.5" stroke="#a0a0a0" stroke-width="1.6"/><text x="831.50" y="509.40" font-size="15.99" fill="#e0e0e0" text-anchor="middle" stroke="#e0e0e0" stroke-width="0.29" >50</text><line x1="892.10" y1="486.5" x2="892.10" y2="492.5" stroke="#a0a0a0" stroke-width="1.6"/><text x="892.10" y="509.40" font-size="15.99" fill="#e0e0e0" text-anchor="middle" stroke="#e0e0e0" stroke-width="0.29" >60</text><line x1="952.70" y1="486.5" x2="952.70" y2="492.5" stroke="#a0a0a0" stroke-width="1.6"/><text x="952.70" y="509.40" font-size="15.99" fill="#e0e0e0" text-anchor="middle" stroke="#e0e0e0" stroke-width="0.29" >70</text><line x1="1013.30" y1="486.5" x2="1013.30" y2="492.5" stroke="#a0a0a0" stroke-width="1.6"/><text x="1013.30" y="509.40" font-size="15.99" fill="#e0e0e0" text-anchor="middle" stroke="#e0e0e0" stroke-width="0.29" >80</text><line x1="1073.90" y1="486.5" x2="1073.90" y2="492.5" stroke="#a0a0a0" stroke-width="1.6"/><text x="1073.90" y="509.40" font-size="15.99" fill="#e0e0e0" text-anchor="middle" stroke="#e0e0e0" stroke-width="0.29" >90</text><line x1="1134.50" y1="486.5" x2="1134.50" y2="492.5" stroke="#a0a0a0" stroke-width="1.6"/><text x="1134.50" y="509.40" font-size="15.99" fill="#e0e0e0" text-anchor="middle" stroke="#e0e0e0" stroke-width="0.29" >100</text><rect x="528.5" y="149.1" width="606.0" height="337.4" fill="none" stroke="#a8a8a8" stroke-width="1.8"/><polyline points="528.50,315.00 589.10,343.30 649.70,334.20 710.30,328.30 770.90,328.70 831.50,328.70 892.10,331.30 952.70,334.20 1013.30,339.20 1073.90,343.70 1134.50,347.00" fill="none" stroke="#e01414" stroke-width="4" stroke-linejoin="round"/><polyline points="528.50,312.00 589.10,335.80 649.70,320.80 710.30,310.80 770.90,306.70 831.50,304.50 892.10,304.20 952.70,305.00 1013.30,307.00 1073.90,310.00 1134.50,310.80" fill="none" stroke="#148c14" stroke-width="4" stroke-linejoin="round"/><polyline points="528.50,308.30 589.10,330.00 649.70,316.30 710.30,305.50 770.90,300.00 831.50,296.20 892.10,294.50 952.70,293.30 1013.30,293.30 1073.90,293.80 1134.50,288.70" fill="none" stroke="#0a0ae6" stroke-width="4" stroke-linejoin="round"/><text x="1438.80" y="142.90" font-size="15.99" fill="#e0e0e0" textLength="115.20" lengthAdjust="spacingAndGlyphs" stroke="#e0e0e0" stroke-width="0.29" >Gamma Log/Log</text><line x1="1205.3" y1="482.82" x2="1816.0" y2="482.82" stroke="#a0a0a0" stroke-width="1.6"/><line x1="1198" y1="482.82" x2="1205.3" y2="482.82" stroke="#a0a0a0" stroke-width="1.6"/><text x="1197.70" y="489.32" font-size="15.99" fill="#e0e0e0" text-anchor="end" stroke="#e0e0e0" stroke-width="0.29" >1</text><line x1="1205.3" y1="440.50" x2="1816.0" y2="440.50" stroke="#a0a0a0" stroke-width="1.6"/><line x1="1198" y1="440.50" x2="1205.3" y2="440.50" stroke="#a0a0a0" stroke-width="1.6"/><text x="1197.70" y="447.00" font-size="15.99" fill="#e0e0e0" text-anchor="end" stroke="#e0e0e0" stroke-width="0.29" >1,2</text><line x1="1205.3" y1="398.18" x2="1816.0" y2="398.18" stroke="#a0a0a0" stroke-width="1.6"/><line x1="1198" y1="398.18" x2="1205.3" y2="398.18" stroke="#a0a0a0" stroke-width="1.6"/><text x="1197.70" y="404.68" font-size="15.99" fill="#e0e0e0" text-anchor="end" stroke="#e0e0e0" stroke-width="0.29" >1,4</text><line x1="1205.3" y1="355.86" x2="1816.0" y2="355.86" stroke="#a0a0a0" stroke-width="1.6"/><line x1="1198" y1="355.86" x2="1205.3" y2="355.86" stroke="#a0a0a0" stroke-width="1.6"/><text x="1197.70" y="362.36" font-size="15.99" fill="#e0e0e0" text-anchor="end" stroke="#e0e0e0" stroke-width="0.29" >1,6</text><line x1="1205.3" y1="313.54" x2="1816.0" y2="313.54" stroke="#a0a0a0" stroke-width="1.6"/><line x1="1198" y1="313.54" x2="1205.3" y2="313.54" stroke="#a0a0a0" stroke-width="1.6"/><text x="1197.70" y="320.04" font-size="15.99" fill="#e0e0e0" text-anchor="end" stroke="#e0e0e0" stroke-width="0.29" >1,8</text><line x1="1205.3" y1="271.22" x2="1816.0" y2="271.22" stroke="#a0a0a0" stroke-width="1.6"/><line x1="1198" y1="271.22" x2="1205.3" y2="271.22" stroke="#a0a0a0" stroke-width="1.6"/><text x="1197.70" y="277.72" font-size="15.99" fill="#e0e0e0" text-anchor="end" stroke="#e0e0e0" stroke-width="0.29" >2</text><line x1="1205.3" y1="228.90" x2="1816.0" y2="228.90" stroke="#a0a0a0" stroke-width="1.6"/><line x1="1198" y1="228.90" x2="1205.3" y2="228.90" stroke="#a0a0a0" stroke-width="1.6"/><text x="1197.70" y="235.40" font-size="15.99" fill="#e0e0e0" text-anchor="end" stroke="#e0e0e0" stroke-width="0.29" >2,2</text><line x1="1205.3" y1="186.58" x2="1816.0" y2="186.58" stroke="#a0a0a0" stroke-width="1.6"/><line x1="1198" y1="186.58" x2="1205.3" y2="186.58" stroke="#a0a0a0" stroke-width="1.6"/><text x="1197.70" y="193.08" font-size="15.99" fill="#e0e0e0" text-anchor="end" stroke="#e0e0e0" stroke-width="0.29" >2,4</text><line x1="1205.30" y1="486.0" x2="1205.30" y2="492.0" stroke="#a0a0a0" stroke-width="1.6"/><text x="1205.30" y="509.40" font-size="15.99" fill="#e0e0e0" text-anchor="middle" stroke="#e0e0e0" stroke-width="0.29" >0</text><line x1="1266.22" y1="486.0" x2="1266.22" y2="492.0" stroke="#a0a0a0" stroke-width="1.6"/><text x="1266.22" y="509.40" font-size="15.99" fill="#e0e0e0" text-anchor="middle" stroke="#e0e0e0" stroke-width="0.29" >10</text><line x1="1327.14" y1="486.0" x2="1327.14" y2="492.0" stroke="#a0a0a0" stroke-width="1.6"/><text x="1327.14" y="509.40" font-size="15.99" fill="#e0e0e0" text-anchor="middle" stroke="#e0e0e0" stroke-width="0.29" >20</text><line x1="1388.06" y1="486.0" x2="1388.06" y2="492.0" stroke="#a0a0a0" stroke-width="1.6"/><text x="1388.06" y="509.40" font-size="15.99" fill="#e0e0e0" text-anchor="middle" stroke="#e0e0e0" stroke-width="0.29" >30</text><line x1="1448.98" y1="486.0" x2="1448.98" y2="492.0" stroke="#a0a0a0" stroke-width="1.6"/><text x="1448.98" y="509.40" font-size="15.99" fill="#e0e0e0" text-anchor="middle" stroke="#e0e0e0" stroke-width="0.29" >40</text><line x1="1509.90" y1="486.0" x2="1509.90" y2="492.0" stroke="#a0a0a0" stroke-width="1.6"/><text x="1509.90" y="509.40" font-size="15.99" fill="#e0e0e0" text-anchor="middle" stroke="#e0e0e0" stroke-width="0.29" >50</text><line x1="1570.82" y1="486.0" x2="1570.82" y2="492.0" stroke="#a0a0a0" stroke-width="1.6"/><text x="1570.82" y="509.40" font-size="15.99" fill="#e0e0e0" text-anchor="middle" stroke="#e0e0e0" stroke-width="0.29" >60</text><line x1="1631.74" y1="486.0" x2="1631.74" y2="492.0" stroke="#a0a0a0" stroke-width="1.6"/><text x="1631.74" y="509.40" font-size="15.99" fill="#e0e0e0" text-anchor="middle" stroke="#e0e0e0" stroke-width="0.29" >70</text><line x1="1692.66" y1="486.0" x2="1692.66" y2="492.0" stroke="#a0a0a0" stroke-width="1.6"/><text x="1692.66" y="509.40" font-size="15.99" fill="#e0e0e0" text-anchor="middle" stroke="#e0e0e0" stroke-width="0.29" >80</text><line x1="1753.58" y1="486.0" x2="1753.58" y2="492.0" stroke="#a0a0a0" stroke-width="1.6"/><text x="1753.58" y="509.40" font-size="15.99" fill="#e0e0e0" text-anchor="middle" stroke="#e0e0e0" stroke-width="0.29" >90</text><line x1="1814.50" y1="486.0" x2="1814.50" y2="492.0" stroke="#a0a0a0" stroke-width="1.6"/><text x="1814.50" y="509.40" font-size="15.99" fill="#e0e0e0" text-anchor="middle" stroke="#e0e0e0" stroke-width="0.29" >100</text><rect x="1205.3" y="148.3" width="610.7" height="337.7" fill="none" stroke="#a8a8a8" stroke-width="1.8"/><polyline points="1204.6,421 1265.8,238.3 1325.2,234.7 1386.4,236 1447.7,234.5 1508.7,233.8 1569.8,233.5 1630.9,233.2 1693.3,230 1756.7,217.5 1815,210.6" fill="none" stroke="#8c8c8c" stroke-width="3" stroke-linejoin="round"/><polyline points="1204.6,420.0 1208.0,392.6 1210.2,358.0 1215.2,345.0 1224.6,321.9 1226.6,318.4 1229.7,311.5 1232.7,305.5 1235.8,300.2 1238.8,295.5 1241.9,291.3 1244.9,287.5 1247.9,284.0 1251.0,280.9 1254.0,278.0 1257.1,275.3 1260.1,272.9 1263.2,270.6 1266.2,268.4 1272.3,264.6 1278.4,261.2 1284.5,258.1 1290.6,255.4 1296.7,253.0 1302.8,250.7 1308.9,248.7 1315.0,246.8 1321.0,245.1 1327.1,243.5 1333.2,242.0 1339.3,240.7 1345.4,239.4 1351.5,238.2 1357.6,237.1 1363.7,236.0 1369.8,235.0 1375.9,234.0 1382.0,233.1 1388.1,232.3 1394.2,231.5 1400.2,230.7 1406.3,230.0 1412.4,229.3 1418.5,228.6 1424.6,228.0 1430.7,227.4 1436.8,226.8 1442.9,226.2 1449.0,225.7 1455.1,225.1 1461.2,224.6 1467.3,224.2 1473.3,223.7 1479.4,223.2 1485.5,222.8 1491.6,222.4 1497.7,222.0 1503.8,221.6 1509.9,221.2 1516.0,220.9 1522.1,220.5 1528.2,220.1 1534.3,219.8 1540.4,219.5 1546.5,219.2 1552.5,218.9 1558.6,218.6 1564.7,218.3 1570.8,218.0 1576.9,217.7 1583.0,217.4 1589.1,217.2 1595.2,216.9 1601.3,216.7 1607.4,216.4 1613.5,216.2 1619.6,216.0 1625.6,215.7 1631.7,215.5 1637.8,215.3 1643.9,215.1 1650.0,214.9 1656.1,214.7 1662.2,214.5 1668.3,214.3 1674.4,214.1 1680.5,213.9 1686.6,213.7 1692.7,213.5 1698.8,213.4 1704.8,213.2 1710.9,213.0 1717.0,212.9 1723.1,212.7 1729.2,212.5 1735.3,212.4 1741.4,212.2 1747.5,212.1 1753.6,211.9 1759.7,211.8 1765.8,211.6 1771.9,211.5 1777.9,211.4 1784.0,211.2 1790.1,211.1 1796.2,211.0 1802.3,210.8 1808.4,210.7 1815.0,210.3" fill="none" stroke="#f2f21a" stroke-width="3.2" stroke-linejoin="round"/><text x="167.60" y="553.70" font-size="31.98" fill="#f2f2f2" textLength="230.30" lengthAdjust="spacingAndGlyphs" stroke="#f2f2f2" stroke-width="0.58" >Avg dE2000: 3,9</text><text x="606.20" y="553.70" font-size="31.98" fill="#f2f2f2" textLength="201.80" lengthAdjust="spacingAndGlyphs" stroke="#f2f2f2" stroke-width="0.58" >Avg CCT: 7250</text><text x="1005.00" y="554.20" font-size="32.41" fill="#f2f2f2" textLength="293.00" lengthAdjust="spacingAndGlyphs" stroke="#f2f2f2" stroke-width="0.58" >Contrast Ratio: 1474</text><text x="1463.00" y="554.20" font-size="32.41" fill="#f2f2f2" textLength="269.30" lengthAdjust="spacingAndGlyphs" stroke="#f2f2f2" stroke-width="0.58" >Total Gamma: 2,17</text><text x="412.00" y="706.20" font-size="13.66" fill="#f0f0f0" text-anchor="middle" stroke="#f0f0f0" stroke-width="0.25" >0</text><text x="534.50" y="706.20" font-size="13.66" fill="#f0f0f0" text-anchor="middle" stroke="#f0f0f0" stroke-width="0.25" >10</text><text x="657.00" y="706.20" font-size="13.66" fill="#f0f0f0" text-anchor="middle" stroke="#f0f0f0" stroke-width="0.25" >20</text><text x="779.50" y="706.20" font-size="13.66" fill="#f0f0f0" text-anchor="middle" stroke="#f0f0f0" stroke-width="0.25" >30</text><text x="902.00" y="706.20" font-size="13.66" fill="#f0f0f0" text-anchor="middle" stroke="#f0f0f0" stroke-width="0.25" >40</text><text x="1024.50" y="706.20" font-size="13.66" fill="#f0f0f0" text-anchor="middle" stroke="#f0f0f0" stroke-width="0.25" >50</text><text x="1147.00" y="706.20" font-size="13.66" fill="#f0f0f0" text-anchor="middle" stroke="#f0f0f0" stroke-width="0.25" >60</text><text x="1269.50" y="706.20" font-size="13.66" fill="#f0f0f0" text-anchor="middle" stroke="#f0f0f0" stroke-width="0.25" >70</text><text x="1392.00" y="706.20" font-size="13.66" fill="#f0f0f0" text-anchor="middle" stroke="#f0f0f0" stroke-width="0.25" >80</text><text x="1514.50" y="706.20" font-size="13.66" fill="#f0f0f0" text-anchor="middle" stroke="#f0f0f0" stroke-width="0.25" >90</text><text x="1637.00" y="706.20" font-size="13.66" fill="#f0f0f0" text-anchor="middle" stroke="#f0f0f0" stroke-width="0.25" >100</text><text transform="translate(352.2,604) rotate(-90)" font-size="13.2" fill="#e8e8e8" text-anchor="middle" textLength="38" lengthAdjust="spacingAndGlyphs">Actual</text><text transform="translate(352.2,666) rotate(-90)" font-size="13.2" fill="#e8e8e8" text-anchor="middle" textLength="38" lengthAdjust="spacingAndGlyphs">Target</text><text x="92.00" y="771.00" font-size="32.12" fill="#f4f4f4" textLength="232.70" lengthAdjust="spacingAndGlyphs" stroke="#f4f4f4" stroke-width="0.58" >Current Reading</text><text x="92.00" y="815.80" font-size="25.58" fill="#f4f4f4" textLength="108.30" lengthAdjust="spacingAndGlyphs" stroke="#f4f4f4" stroke-width="0.46" >x: 0,3009</text><text x="92.00" y="859.60" font-size="25.58" fill="#f4f4f4" textLength="108.50" lengthAdjust="spacingAndGlyphs" stroke="#f4f4f4" stroke-width="0.46" >y: 0,3217</text><text x="92.00" y="902.40" font-size="25.58" fill="#f4f4f4" textLength="116.50" lengthAdjust="spacingAndGlyphs" stroke="#f4f4f4" stroke-width="0.46" >fL: 139,15</text><text x="92.00" y="946.20" font-size="25.58" fill="#f4f4f4" textLength="169.00" lengthAdjust="spacingAndGlyphs" stroke="#f4f4f4" stroke-width="0.46" >cd/m²: 476,76</text><rect x="471.7" y="747.7" width="254.3" height="183.89999999999998" fill="none" stroke="#8a8a8a" stroke-width="1.2"/><line x1="481.80" y1="931.6" x2="481.80" y2="936.6" stroke="#c8c8c8" stroke-width="1.4"/><text x="481.80" y="952.90" font-size="14.83" fill="#e0e0e0" text-anchor="middle" stroke="#e0e0e0" stroke-width="0.27" >0,29</text><line x1="532.58" y1="931.6" x2="532.58" y2="936.6" stroke="#c8c8c8" stroke-width="1.4"/><text x="532.58" y="952.90" font-size="14.83" fill="#e0e0e0" text-anchor="middle" stroke="#e0e0e0" stroke-width="0.27" >0,3</text><line x1="583.36" y1="931.6" x2="583.36" y2="936.6" stroke="#c8c8c8" stroke-width="1.4"/><text x="583.36" y="952.90" font-size="14.83" fill="#e0e0e0" text-anchor="middle" stroke="#e0e0e0" stroke-width="0.27" >0,31</text><line x1="634.14" y1="931.6" x2="634.14" y2="936.6" stroke="#c8c8c8" stroke-width="1.4"/><text x="634.14" y="952.90" font-size="14.83" fill="#e0e0e0" text-anchor="middle" stroke="#e0e0e0" stroke-width="0.27" >0,32</text><line x1="684.92" y1="931.6" x2="684.92" y2="936.6" stroke="#c8c8c8" stroke-width="1.4"/><text x="684.92" y="952.90" font-size="14.83" fill="#e0e0e0" text-anchor="middle" stroke="#e0e0e0" stroke-width="0.27" >0,33</text><line x1="466" y1="762.30" x2="471.7" y2="762.30" stroke="#c8c8c8" stroke-width="1.4"/><text x="464.80" y="767.70" font-size="14.83" fill="#e0e0e0" text-anchor="end" stroke="#e0e0e0" stroke-width="0.27" >0,35</text><line x1="466" y1="798.85" x2="471.7" y2="798.85" stroke="#c8c8c8" stroke-width="1.4"/><text x="464.80" y="804.25" font-size="14.83" fill="#e0e0e0" text-anchor="end" stroke="#e0e0e0" stroke-width="0.27" >0,34</text><line x1="466" y1="835.40" x2="471.7" y2="835.40" stroke="#c8c8c8" stroke-width="1.4"/><text x="464.80" y="840.80" font-size="14.83" fill="#e0e0e0" text-anchor="end" stroke="#e0e0e0" stroke-width="0.27" >0,33</text><line x1="466" y1="871.95" x2="471.7" y2="871.95" stroke="#c8c8c8" stroke-width="1.4"/><text x="464.80" y="877.35" font-size="14.83" fill="#e0e0e0" text-anchor="end" stroke="#e0e0e0" stroke-width="0.27" >0,32</text><line x1="466" y1="908.50" x2="471.7" y2="908.50" stroke="#c8c8c8" stroke-width="1.4"/><text x="464.80" y="913.90" font-size="14.83" fill="#e0e0e0" text-anchor="end" stroke="#e0e0e0" stroke-width="0.27" >0,31</text><line x1="504" y1="931" x2="724.5" y2="778.2" stroke="#000" stroke-width="3"/><rect x="591" y="832.4" width="13.6" height="13.6" fill="#fff" stroke="#000" stroke-width="2"/><circle cx="515.5" cy="878.3" r="5" fill="#111"/><circle cx="535.8" cy="858.8" r="4.8" fill="#3a3a3a" stroke="#222" stroke-width="1"/><circle cx="541.5" cy="852.6" r="4.8" fill="#b8b8b8" stroke="#222" stroke-width="1"/><circle cx="542.2" cy="855" r="4.8" fill="#dcdcdc" stroke="#222" stroke-width="1"/><circle cx="541" cy="858" r="4.8" fill="#cfcfcf" stroke="#222" stroke-width="1"/><circle cx="540" cy="861" r="4.8" fill="#ececec" stroke="#222" stroke-width="1"/><circle cx="538.6" cy="864.5" r="4.8" fill="#ffffff" stroke="#222" stroke-width="1"/><text x="945.50" y="745.60" font-size="15.99" fill="#f0f0f0" text-anchor="middle" stroke="#f0f0f0" stroke-width="0.29" >0</text><text x="1019.20" y="745.60" font-size="15.99" fill="#f0f0f0" text-anchor="middle" stroke="#f0f0f0" stroke-width="0.29" >10</text><text x="1087.95" y="745.60" font-size="15.99" fill="#f0f0f0" text-anchor="middle" stroke="#f0f0f0" stroke-width="0.29" >20</text><text x="1156.70" y="745.60" font-size="15.99" fill="#f0f0f0" text-anchor="middle" stroke="#f0f0f0" stroke-width="0.29" >30</text><text x="1225.45" y="745.60" font-size="15.99" fill="#f0f0f0" text-anchor="middle" stroke="#f0f0f0" stroke-width="0.29" >40</text><text x="1294.20" y="745.60" font-size="15.99" fill="#f0f0f0" text-anchor="middle" stroke="#f0f0f0" stroke-width="0.29" >50</text><text x="1362.95" y="745.60" font-size="15.99" fill="#f0f0f0" text-anchor="middle" stroke="#f0f0f0" stroke-width="0.29" >60</text><text x="1431.70" y="745.60" font-size="15.99" fill="#f0f0f0" text-anchor="middle" stroke="#f0f0f0" stroke-width="0.29" >70</text><text x="1500.45" y="745.60" font-size="15.99" fill="#f0f0f0" text-anchor="middle" stroke="#f0f0f0" stroke-width="0.29" >80</text><text x="1569.20" y="745.60" font-size="15.99" fill="#f0f0f0" text-anchor="middle" stroke="#f0f0f0" stroke-width="0.29" >90</text><text x="1637.95" y="745.60" font-size="15.99" fill="#f0f0f0" text-anchor="middle" stroke="#f0f0f0" stroke-width="0.29" >100</text><text x="757.60" y="774.20" font-size="17.15" fill="#f2f2f2" font-weight="bold" stroke="#f2f2f2" stroke-width="0.31" >x: CIE31</text><text x="911.40" y="774.20" font-size="16.72" fill="#f2f2f2" stroke="#f2f2f2" stroke-width="0.30" >0,25</text><text x="989.20" y="774.20" font-size="16.72" fill="#f2f2f2" stroke="#f2f2f2" stroke-width="0.30" >0,30</text><text x="1057.95" y="774.20" font-size="16.72" fill="#f2f2f2" stroke="#f2f2f2" stroke-width="0.30" >0,30</text><text x="1126.70" y="774.20" font-size="16.72" fill="#f2f2f2" stroke="#f2f2f2" stroke-width="0.30" >0,30</text><text x="1195.45" y="774.20" font-size="16.72" fill="#f2f2f2" stroke="#f2f2f2" stroke-width="0.30" >0,30</text><text x="1264.20" y="774.20" font-size="16.72" fill="#f2f2f2" stroke="#f2f2f2" stroke-width="0.30" >0,30</text><text x="1332.95" y="774.20" font-size="16.72" fill="#f2f2f2" stroke="#f2f2f2" stroke-width="0.30" >0,30</text><text x="1401.70" y="774.20" font-size="16.72" fill="#f2f2f2" stroke="#f2f2f2" stroke-width="0.30" >0,30</text><text x="1470.45" y="774.20" font-size="16.72" fill="#f2f2f2" stroke="#f2f2f2" stroke-width="0.30" >0,30</text><text x="1539.20" y="774.20" font-size="16.72" fill="#f2f2f2" stroke="#f2f2f2" stroke-width="0.30" >0,30</text><text x="1607.95" y="774.20" font-size="16.72" fill="#f2f2f2" stroke="#f2f2f2" stroke-width="0.30" >0,30</text><text x="757.60" y="801.10" font-size="17.15" fill="#e8e8e8" font-weight="bold" stroke="#e8e8e8" stroke-width="0.31" >y: CIE31</text><text x="911.40" y="801.10" font-size="16.72" fill="#e8e8e8" stroke="#e8e8e8" stroke-width="0.30" >0,27</text><text x="989.20" y="801.10" font-size="16.72" fill="#e8e8e8" stroke="#e8e8e8" stroke-width="0.30" >0,32</text><text x="1057.95" y="801.10" font-size="16.72" fill="#e8e8e8" stroke="#e8e8e8" stroke-width="0.30" >0,32</text><text x="1126.70" y="801.10" font-size="16.72" fill="#e8e8e8" stroke="#e8e8e8" stroke-width="0.30" >0,32</text><text x="1195.45" y="801.10" font-size="16.72" fill="#e8e8e8" stroke="#e8e8e8" stroke-width="0.30" >0,32</text><text x="1264.20" y="801.10" font-size="16.72" fill="#e8e8e8" stroke="#e8e8e8" stroke-width="0.30" >0,32</text><text x="1332.95" y="801.10" font-size="16.72" fill="#e8e8e8" stroke="#e8e8e8" stroke-width="0.30" >0,32</text><text x="1401.70" y="801.10" font-size="16.72" fill="#e8e8e8" stroke="#e8e8e8" stroke-width="0.30" >0,32</text><text x="1470.45" y="801.10" font-size="16.72" fill="#e8e8e8" stroke="#e8e8e8" stroke-width="0.30" >0,32</text><text x="1539.20" y="801.10" font-size="16.72" fill="#e8e8e8" stroke="#e8e8e8" stroke-width="0.30" >0,32</text><text x="1607.95" y="801.10" font-size="16.72" fill="#e8e8e8" stroke="#e8e8e8" stroke-width="0.30" >0,32</text><text x="757.60" y="828.90" font-size="17.15" fill="#f2f2f2" font-weight="bold" stroke="#f2f2f2" stroke-width="0.31" >Y</text><text x="911.40" y="828.90" font-size="16.72" fill="#f2f2f2" stroke="#f2f2f2" stroke-width="0.30" >0,32</text><text x="989.20" y="828.90" font-size="16.72" fill="#f2f2f2" stroke="#f2f2f2" stroke-width="0.30" >3,55</text><text x="1057.95" y="828.90" font-size="16.72" fill="#f2f2f2" stroke="#f2f2f2" stroke-width="0.30" >14,74</text><text x="1126.70" y="828.90" font-size="16.72" fill="#f2f2f2" stroke="#f2f2f2" stroke-width="0.30" >35,02</text><text x="1195.45" y="828.90" font-size="16.72" fill="#f2f2f2" stroke="#f2f2f2" stroke-width="0.30" >65,50</text><text x="1264.20" y="828.90" font-size="16.72" fill="#f2f2f2" stroke="#f2f2f2" stroke-width="0.30" >107,13</text><text x="1332.95" y="828.90" font-size="16.72" fill="#f2f2f2" stroke="#f2f2f2" stroke-width="0.30" >157,29</text><text x="1401.70" y="828.90" font-size="16.72" fill="#f2f2f2" stroke="#f2f2f2" stroke-width="0.30" >218,32</text><text x="1470.45" y="828.90" font-size="16.72" fill="#f2f2f2" stroke="#f2f2f2" stroke-width="0.30" >292,61</text><text x="1539.20" y="828.90" font-size="16.72" fill="#f2f2f2" stroke="#f2f2f2" stroke-width="0.30" >378,28</text><text x="1607.95" y="828.90" font-size="16.72" fill="#f2f2f2" stroke="#f2f2f2" stroke-width="0.30" >476,76</text><text x="757.60" y="856.00" font-size="17.15" fill="#e8e8e8" font-weight="bold" stroke="#e8e8e8" stroke-width="0.31" >Target Y</text><text x="911.40" y="856.00" font-size="16.72" fill="#e8e8e8" stroke="#e8e8e8" stroke-width="0.30" >0,00</text><text x="989.20" y="856.00" font-size="16.72" fill="#e8e8e8" stroke="#e8e8e8" stroke-width="0.30" >4,92</text><text x="1057.95" y="856.00" font-size="16.72" fill="#e8e8e8" stroke="#e8e8e8" stroke-width="0.30" >15,78</text><text x="1126.70" y="856.00" font-size="16.72" fill="#e8e8e8" stroke="#e8e8e8" stroke-width="0.30" >34,46</text><text x="1195.45" y="856.00" font-size="16.72" fill="#e8e8e8" stroke="#e8e8e8" stroke-width="0.30" >63,35</text><text x="1264.20" y="856.00" font-size="16.72" fill="#e8e8e8" stroke="#e8e8e8" stroke-width="0.30" >102,91</text><text x="1332.95" y="856.00" font-size="16.72" fill="#e8e8e8" stroke="#e8e8e8" stroke-width="0.30" >151,87</text><text x="1401.70" y="856.00" font-size="16.72" fill="#e8e8e8" stroke="#e8e8e8" stroke-width="0.30" >212,26</text><text x="1470.45" y="856.00" font-size="16.72" fill="#e8e8e8" stroke="#e8e8e8" stroke-width="0.30" >287,88</text><text x="1539.20" y="856.00" font-size="16.72" fill="#e8e8e8" stroke="#e8e8e8" stroke-width="0.30" >377,26</text><text x="1607.95" y="856.00" font-size="16.72" fill="#e8e8e8" stroke="#e8e8e8" stroke-width="0.30" >476,76</text><text x="757.60" y="883.80" font-size="17.15" fill="#f2f2f2" font-weight="bold" stroke="#f2f2f2" stroke-width="0.31" >Gamma Log/Log</text><text x="911.40" y="883.80" font-size="16.72" fill="#f2f2f2" stroke="#f2f2f2" stroke-width="0.30" >1,28</text><text x="989.20" y="883.80" font-size="16.72" fill="#f2f2f2" stroke="#f2f2f2" stroke-width="0.30" >2,15</text><text x="1057.95" y="883.80" font-size="16.72" fill="#f2f2f2" stroke="#f2f2f2" stroke-width="0.30" >2,16</text><text x="1126.70" y="883.80" font-size="16.72" fill="#f2f2f2" stroke="#f2f2f2" stroke-width="0.30" >2,16</text><text x="1195.45" y="883.80" font-size="16.72" fill="#f2f2f2" stroke="#f2f2f2" stroke-width="0.30" >2,17</text><text x="1264.20" y="883.80" font-size="16.72" fill="#f2f2f2" stroke="#f2f2f2" stroke-width="0.30" >2,17</text><text x="1332.95" y="883.80" font-size="16.72" fill="#f2f2f2" stroke="#f2f2f2" stroke-width="0.30" >2,17</text><text x="1401.70" y="883.80" font-size="16.72" fill="#f2f2f2" stroke="#f2f2f2" stroke-width="0.30" >2,17</text><text x="1470.45" y="883.80" font-size="16.72" fill="#f2f2f2" stroke="#f2f2f2" stroke-width="0.30" >2,19</text><text x="1539.20" y="883.80" font-size="16.72" fill="#f2f2f2" stroke="#f2f2f2" stroke-width="0.30" >2,24</text><text x="1607.95" y="883.80" font-size="16.72" fill="#f2f2f2" stroke="#f2f2f2" stroke-width="0.30" >2,27</text><text x="757.60" y="911.00" font-size="17.15" fill="#e8e8e8" font-weight="bold" stroke="#e8e8e8" stroke-width="0.31" >CCT</text><text x="911.40" y="911.00" font-size="16.72" fill="#e8e8e8" stroke="#e8e8e8" stroke-width="0.30" >15089,00</text><text x="989.20" y="911.00" font-size="16.72" fill="#e8e8e8" stroke="#e8e8e8" stroke-width="0.30" >7618,00</text><text x="1057.95" y="911.00" font-size="16.72" fill="#e8e8e8" stroke="#e8e8e8" stroke-width="0.30" >7274,00</text><text x="1126.70" y="911.00" font-size="16.72" fill="#e8e8e8" stroke="#e8e8e8" stroke-width="0.30" >7216,00</text><text x="1195.45" y="911.00" font-size="16.72" fill="#e8e8e8" stroke="#e8e8e8" stroke-width="0.30" >7199,00</text><text x="1264.20" y="911.00" font-size="16.72" fill="#e8e8e8" stroke="#e8e8e8" stroke-width="0.30" >7186,00</text><text x="1332.95" y="911.00" font-size="16.72" fill="#e8e8e8" stroke="#e8e8e8" stroke-width="0.30" >7176,00</text><text x="1401.70" y="911.00" font-size="16.72" fill="#e8e8e8" stroke="#e8e8e8" stroke-width="0.30" >7174,00</text><text x="1470.45" y="911.00" font-size="16.72" fill="#e8e8e8" stroke="#e8e8e8" stroke-width="0.30" >7180,00</text><text x="1539.20" y="911.00" font-size="16.72" fill="#e8e8e8" stroke="#e8e8e8" stroke-width="0.30" >7203,00</text><text x="1607.95" y="911.00" font-size="16.72" fill="#e8e8e8" stroke="#e8e8e8" stroke-width="0.30" >7275,00</text><text x="757.60" y="938.60" font-size="17.15" fill="#f2f2f2" font-weight="bold" stroke="#f2f2f2" stroke-width="0.31" >ΔE 2000</text><text x="911.40" y="938.60" font-size="16.72" fill="#f2f2f2" stroke="#f2f2f2" stroke-width="0.30" >0,72</text><text x="989.20" y="938.60" font-size="16.72" fill="#f2f2f2" stroke="#f2f2f2" stroke-width="0.30" >2,16</text><text x="1057.95" y="938.60" font-size="16.72" fill="#f2f2f2" stroke="#f2f2f2" stroke-width="0.30" >2,18</text><text x="1126.70" y="938.60" font-size="16.72" fill="#f2f2f2" stroke="#f2f2f2" stroke-width="0.30" >2,74</text><text x="1195.45" y="938.60" font-size="16.72" fill="#f2f2f2" stroke="#f2f2f2" stroke-width="0.30" >3,36</text><text x="1264.20" y="938.60" font-size="16.72" fill="#f2f2f2" stroke="#f2f2f2" stroke-width="0.30" >3,90</text><text x="1332.95" y="938.60" font-size="16.72" fill="#f2f2f2" stroke="#f2f2f2" stroke-width="0.30" >4,22</text><text x="1401.70" y="938.60" font-size="16.72" fill="#f2f2f2" stroke="#f2f2f2" stroke-width="0.30" >4,53</text><text x="1470.45" y="938.60" font-size="16.72" fill="#f2f2f2" stroke="#f2f2f2" stroke-width="0.30" >4,80</text><text x="1539.20" y="938.60" font-size="16.72" fill="#f2f2f2" stroke="#f2f2f2" stroke-width="0.30" >5,12</text><text x="1607.95" y="938.60" font-size="16.72" fill="#f2f2f2" stroke="#f2f2f2" stroke-width="0.30" >5,62</text><text x="71.25" y="1032.80" font-size="12.21" fill="#2e2e2e" text-anchor="middle" font-weight="bold" stroke="#2e2e2e" stroke-width="0.22" >0</text><text x="213.05" y="1032.80" font-size="12.21" fill="#2e2e2e" text-anchor="middle" font-weight="bold" stroke="#2e2e2e" stroke-width="0.22" >10</text><text x="354.85" y="1032.80" font-size="12.21" fill="#2e2e2e" text-anchor="middle" font-weight="bold" stroke="#2e2e2e" stroke-width="0.22" >20</text><text x="496.65" y="1032.80" font-size="12.21" fill="#2e2e2e" text-anchor="middle" font-weight="bold" stroke="#2e2e2e" stroke-width="0.22" >30</text><text x="638.45" y="1032.80" font-size="12.21" fill="#2e2e2e" text-anchor="middle" font-weight="bold" stroke="#2e2e2e" stroke-width="0.22" >40</text><text x="780.25" y="1032.80" font-size="12.21" fill="#2e2e2e" text-anchor="middle" font-weight="bold" stroke="#2e2e2e" stroke-width="0.22" >50</text><text x="922.05" y="1032.80" font-size="12.21" fill="#2e2e2e" text-anchor="middle" font-weight="bold" stroke="#2e2e2e" stroke-width="0.22" >60</text><text x="1063.85" y="1032.80" font-size="12.21" fill="#2e2e2e" text-anchor="middle" font-weight="bold" stroke="#2e2e2e" stroke-width="0.22" >70</text><text x="1205.65" y="1032.80" font-size="12.21" fill="#2e2e2e" text-anchor="middle" font-weight="bold" stroke="#2e2e2e" stroke-width="0.22" >80</text><text x="1347.45" y="1032.80" font-size="12.21" fill="#2e2e2e" text-anchor="middle" font-weight="bold" stroke="#2e2e2e" stroke-width="0.22" >90</text><text x="1490.00" y="1032.80" font-size="12.21" fill="#f4f4f4" text-anchor="middle" font-weight="bold" stroke="#f4f4f4" stroke-width="0.22" >100</text><circle cx="1590.2" cy="978.5" r="8" fill="#8e8e8e"/><path d="M1584.2 982 L1590.2 976 L1596.2 982 Z" fill="#2a2a2a"/><circle cx="1644.45" cy="985.8" r="11" fill="url(#tbg)"/><circle cx="1695.75" cy="985.8" r="11" fill="url(#tbg)"/><circle cx="1746.40" cy="985.8" r="11" fill="url(#tbg)"/><circle cx="1797.15" cy="985.8" r="11" fill="url(#tbg)"/><circle cx="1848.10" cy="985.8" r="11" fill="url(#tbg)"/><circle cx="1901.2" cy="985.8" r="10.8" fill="#2a2a2a"/><rect x="1640.3" y="981.5" width="8.6" height="8.6" fill="#2e2e2e"/><path d="M1693 980.6 L1701.6 986 L1693 991.4 Z" fill="#2e2e2e"/><path d="M1744.6 980.8 h-2.4 v11 h2.4 M1750.8 980.8 h2.4 v11 h-2.4" fill="none" stroke="#2e2e2e" stroke-width="2.4"/><circle cx="1746.2" cy="985.8" r="1.1" fill="#2e2e2e"/><circle cx="1749.2" cy="985.8" r="1.1" fill="#2e2e2e"/><path d="M1798 985.5 c-2.5 -3.5 -6.3 -3.5 -6.3 0 c0 3.5 3.8 3.5 6.3 0 c2.5 -3.5 6.3 -3.5 6.3 0 c0 3.5 -3.8 3.5 -6.3 0 Z" fill="none" stroke="#2e2e2e" stroke-width="2"/><path d="M1843.8 983.5 a5.2 5.2 0 0 1 9.2 -1.5 M1853.8 988 a5.2 5.2 0 0 1 -9.2 1.5" fill="none" stroke="#2e2e2e" stroke-width="2.2"/><path d="M1854.5 978.8 v4.8 h-4.8 Z M1843 992.6 v-4.8 h4.8 Z" fill="#2e2e2e"/><circle cx="1653.5" cy="1020.5" r="10.5" fill="url(#tbg)"/><path d="M1652.5 1014.5 l-4.5 5.5 l4.5 5.5 M1657.5 1014.5 l-4.5 5.5 l4.5 5.5" fill="none" stroke="#2e2e2e" stroke-width="2.1"/><circle cx="1893.5" cy="1020.5" r="10.5" fill="url(#tbg)"/><path d="M1889.5 1014.5 l4.5 5.5 l-4.5 5.5 M1894.5 1014.5 l4.5 5.5 l-4.5 5.5" fill="none" stroke="#2e2e2e" stroke-width="2.1"/><text x="1684.00" y="1029.60" font-size="25.87" fill="#2e2e2e" textLength="56.70" lengthAdjust="spacingAndGlyphs" stroke="#2e2e2e" stroke-width="0.47" >Back</text><text x="1804.90" y="1029.60" font-size="25.87" fill="#2e2e2e" textLength="57.80" lengthAdjust="spacingAndGlyphs" stroke="#2e2e2e" stroke-width="0.47" >Next</text>
</svg>
</body></html>
